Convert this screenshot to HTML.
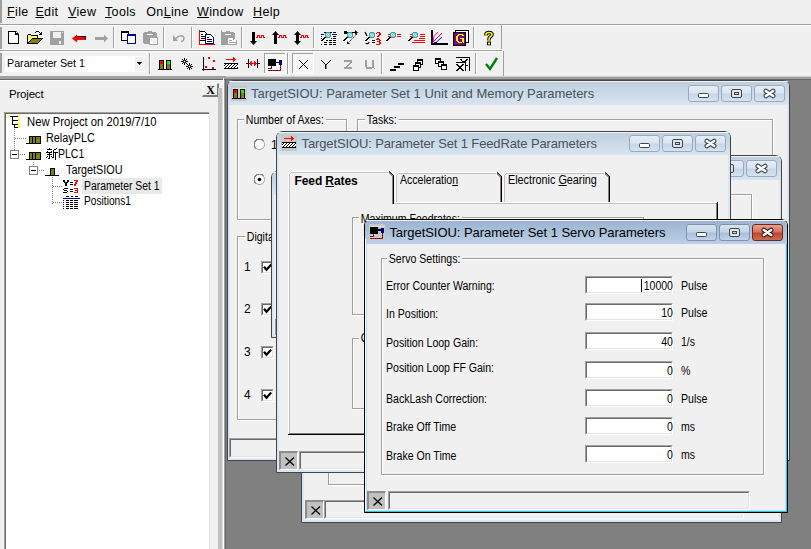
<!DOCTYPE html><html><head><meta charset="utf-8"><style>
*{margin:0;padding:0;box-sizing:border-box}
html,body{width:811px;height:549px;overflow:hidden;background:#f0f0f0;position:relative;font-family:"Liberation Sans",sans-serif}
.a{position:absolute}
.t{position:absolute;line-height:1;white-space:nowrap}
u{text-decoration:underline;text-underline-offset:1px;text-decoration-thickness:1px}
</style></head><body>
<div class="a" style="left:0px;top:0px;width:2px;height:23px;background:#a0a0a0"></div>
<div class="t" style="left:7px;top:6.42px;font-size:12.5px;color:#000;letter-spacing:0.35px;"><u>F</u>ile</div>
<div class="t" style="left:35.4px;top:6.42px;font-size:12.5px;color:#000;letter-spacing:0.35px;"><u>E</u>dit</div>
<div class="t" style="left:68px;top:6.42px;font-size:12.5px;color:#000;letter-spacing:0.35px;"><u>V</u>iew</div>
<div class="t" style="left:105px;top:6.42px;font-size:12.5px;color:#000;letter-spacing:0.35px;"><u>T</u>ools</div>
<div class="t" style="left:146.3px;top:6.42px;font-size:12.5px;color:#000;letter-spacing:0.35px;">On<u>L</u>ine</div>
<div class="t" style="left:197px;top:6.42px;font-size:12.5px;color:#000;letter-spacing:0.35px;"><u>W</u>indow</div>
<div class="t" style="left:253px;top:6.42px;font-size:12.5px;color:#000;letter-spacing:0.35px;"><u>H</u>elp</div>
<div class="a" style="left:0px;top:24px;width:811px;height:1px;background:#a0a0a0"></div>
<div class="a" style="left:0px;top:25px;width:811px;height:1px;background:#fff"></div>
<div class="a" style="left:0px;top:27px;width:2px;height:22px;background:#a0a0a0"></div>
<div class="a" style="left:0px;top:53px;width:2px;height:20px;background:#a0a0a0"></div>
<div class="a" style="left:501px;top:25px;width:1px;height:26px;background:#a0a0a0"></div>
<div class="a" style="left:0px;top:49px;width:502px;height:1px;background:#fff"></div>
<div class="a" style="left:0px;top:50px;width:502px;height:1px;background:#a0a0a0"></div>
<div class="a" style="left:0px;top:51px;width:503px;height:1px;background:#fff"></div>
<div class="a" style="left:503px;top:51px;width:1px;height:26px;background:#a0a0a0"></div>
<div class="a" style="left:113px;top:27px;width:1px;height:21px;background:#a0a0a0"></div>
<div class="a" style="left:114px;top:27px;width:1px;height:21px;background:#fff"></div>
<div class="a" style="left:163px;top:27px;width:1px;height:21px;background:#a0a0a0"></div>
<div class="a" style="left:164px;top:27px;width:1px;height:21px;background:#fff"></div>
<div class="a" style="left:191px;top:27px;width:1px;height:21px;background:#a0a0a0"></div>
<div class="a" style="left:192px;top:27px;width:1px;height:21px;background:#fff"></div>
<div class="a" style="left:241px;top:27px;width:1px;height:21px;background:#a0a0a0"></div>
<div class="a" style="left:242px;top:27px;width:1px;height:21px;background:#fff"></div>
<div class="a" style="left:313px;top:27px;width:1px;height:21px;background:#a0a0a0"></div>
<div class="a" style="left:314px;top:27px;width:1px;height:21px;background:#fff"></div>
<div class="a" style="left:473px;top:27px;width:1px;height:21px;background:#a0a0a0"></div>
<div class="a" style="left:474px;top:27px;width:1px;height:21px;background:#fff"></div>
<div class="a" style="left:149px;top:53px;width:1px;height:21px;background:#a0a0a0"></div>
<div class="a" style="left:150px;top:53px;width:1px;height:21px;background:#fff"></div>
<div class="a" style="left:287px;top:53px;width:1px;height:21px;background:#a0a0a0"></div>
<div class="a" style="left:288px;top:53px;width:1px;height:21px;background:#fff"></div>
<div class="a" style="left:381px;top:53px;width:1px;height:21px;background:#a0a0a0"></div>
<div class="a" style="left:382px;top:53px;width:1px;height:21px;background:#fff"></div>
<div class="a" style="left:475px;top:53px;width:1px;height:21px;background:#a0a0a0"></div>
<div class="a" style="left:476px;top:53px;width:1px;height:21px;background:#fff"></div>
<div class="a" style="left:0px;top:76px;width:226px;height:1px;background:#a0a0a0"></div>
<div class="a" style="left:226px;top:76px;width:585px;height:1px;background:#d0d0d0"></div>
<div class="a" style="left:0px;top:77px;width:811px;height:2px;background:#a0a0a0"></div>
<div class="a" style="left:0px;top:79px;width:811px;height:1px;background:#696969"></div>
<div class="a" style="left:0px;top:80px;width:223px;height:1px;background:#fff"></div>
<div class="a" style="left:5px;top:56px;width:140px;height:16px;background:#fff"></div>
<div class="a" style="left:135px;top:57px;width:10px;height:14px;background:#f0f0f0"></div>
<svg class="a" style="left:136px;top:61px" width="7" height="5" viewBox="0 0 7 5"><path d="M0.8 1h5.4l-2.7 3z" fill="#000"/></svg>
<div class="t" style="left:7.1px;top:57.97px;font-size:11.5px;color:#000;letter-spacing:0px;transform:scaleX(0.93);transform-origin:0 0;">Parameter Set 1</div>
<div class="t" style="left:9px;top:89.27px;font-size:11.5px;color:#000;letter-spacing:-0.2px;">Project</div>
<div class="a" style="left:202px;top:83px;width:17px;height:14px;background:#f0f0f0;border-top:1px solid #fff;border-left:1px solid #fff;border-right:2px solid #7a7a7a;border-bottom:2px solid #7a7a7a"></div>
<div class="t" style="left:206.3px;top:83.84px;font-size:12px;color:#000;font-family:'Liberation Serif',serif;font-weight:bold">X</div>
<div class="a" style="left:4px;top:112px;width:206px;height:437px;background:#fff;border-top:1px solid #a0a0a0;border-left:1px solid #a0a0a0"></div>
<div class="a" style="left:5px;top:113px;width:205px;height:436px;border-top:1px solid #696969;border-left:1px solid #696969"></div>
<div class="a" style="left:209px;top:112px;width:1px;height:437px;background:#e3e3e3"></div>
<div class="a" style="left:218px;top:88px;width:4px;height:461px;background:#c0c0c0"></div>
<div class="a" style="left:222px;top:88px;width:1px;height:461px;background:#e3e3e3"></div>
<div class="a" style="left:223px;top:78px;width:1px;height:471px;background:#fff"></div>
<div class="a" style="left:224px;top:80px;width:1px;height:469px;background:#a0a0a0"></div>
<div class="a" style="left:225px;top:80px;width:1px;height:469px;background:#696969"></div>
<div class="a" style="left:226px;top:80px;width:585px;height:469px;background:#808080"></div>
<svg class="a" style="left:0;top:0" width="811" height="80" viewBox="0 0 811 80"><path d="M8 31h8l3 3v10h-11z" fill="#000" /><path d="M9 32h6v3h3v8h-9z" fill="#fff" /><rect x="16" y="32" width="1" height="1" fill="#fff"/><rect x="36" y="31" width="1" height="1" fill="#000"/><rect x="37" y="31" width="1" height="1" fill="#000"/><rect x="38" y="31" width="1" height="1" fill="#000"/><rect x="35" y="32" width="1" height="1" fill="#000"/><rect x="39" y="32" width="1" height="1" fill="#000"/><rect x="41" y="32" width="1" height="1" fill="#000"/><rect x="40" y="33" width="1" height="1" fill="#000"/><rect x="41" y="33" width="1" height="1" fill="#000"/><rect x="28" y="34" width="1" height="1" fill="#000"/><rect x="29" y="34" width="1" height="1" fill="#000"/><rect x="30" y="34" width="1" height="1" fill="#000"/><rect x="39" y="34" width="1" height="1" fill="#000"/><rect x="40" y="34" width="1" height="1" fill="#000"/><rect x="41" y="34" width="1" height="1" fill="#000"/><rect x="27" y="35" width="1" height="1" fill="#000"/><rect x="31" y="35" width="1" height="1" fill="#000"/><rect x="32" y="35" width="1" height="1" fill="#000"/><rect x="33" y="35" width="1" height="1" fill="#000"/><rect x="34" y="35" width="1" height="1" fill="#000"/><rect x="35" y="35" width="1" height="1" fill="#000"/><rect x="36" y="35" width="1" height="1" fill="#000"/><rect x="37" y="35" width="1" height="1" fill="#000"/><rect x="27" y="36" width="1" height="1" fill="#000"/><rect x="37" y="36" width="1" height="1" fill="#000"/><rect x="27" y="37" width="1" height="1" fill="#000"/><rect x="37" y="37" width="1" height="1" fill="#000"/><rect x="27" y="38" width="1" height="1" fill="#000"/><rect x="32" y="38" width="1" height="1" fill="#000"/><rect x="33" y="38" width="1" height="1" fill="#000"/><rect x="34" y="38" width="1" height="1" fill="#000"/><rect x="35" y="38" width="1" height="1" fill="#000"/><rect x="36" y="38" width="1" height="1" fill="#000"/><rect x="37" y="38" width="1" height="1" fill="#000"/><rect x="38" y="38" width="1" height="1" fill="#000"/><rect x="39" y="38" width="1" height="1" fill="#000"/><rect x="40" y="38" width="1" height="1" fill="#000"/><rect x="41" y="38" width="1" height="1" fill="#000"/><rect x="42" y="38" width="1" height="1" fill="#000"/><rect x="27" y="39" width="1" height="1" fill="#000"/><rect x="31" y="39" width="1" height="1" fill="#000"/><rect x="41" y="39" width="1" height="1" fill="#000"/><rect x="27" y="40" width="1" height="1" fill="#000"/><rect x="30" y="40" width="1" height="1" fill="#000"/><rect x="40" y="40" width="1" height="1" fill="#000"/><rect x="27" y="41" width="1" height="1" fill="#000"/><rect x="29" y="41" width="1" height="1" fill="#000"/><rect x="39" y="41" width="1" height="1" fill="#000"/><rect x="27" y="42" width="1" height="1" fill="#000"/><rect x="28" y="42" width="1" height="1" fill="#000"/><rect x="38" y="42" width="1" height="1" fill="#000"/><rect x="27" y="43" width="1" height="1" fill="#000"/><rect x="28" y="43" width="1" height="1" fill="#000"/><rect x="29" y="43" width="1" height="1" fill="#000"/><rect x="30" y="43" width="1" height="1" fill="#000"/><rect x="31" y="43" width="1" height="1" fill="#000"/><rect x="32" y="43" width="1" height="1" fill="#000"/><rect x="33" y="43" width="1" height="1" fill="#000"/><rect x="34" y="43" width="1" height="1" fill="#000"/><rect x="35" y="43" width="1" height="1" fill="#000"/><rect x="36" y="43" width="1" height="1" fill="#000"/><rect x="37" y="43" width="1" height="1" fill="#000"/><rect x="28" y="35" width="1" height="1" fill="#ff0"/><rect x="29" y="35" width="1" height="1" fill="#fff"/><rect x="30" y="35" width="1" height="1" fill="#ff0"/><rect x="28" y="36" width="1" height="1" fill="#fff"/><rect x="29" y="36" width="1" height="1" fill="#ff0"/><rect x="30" y="36" width="1" height="1" fill="#fff"/><rect x="31" y="36" width="1" height="1" fill="#ff0"/><rect x="32" y="36" width="1" height="1" fill="#fff"/><rect x="33" y="36" width="1" height="1" fill="#ff0"/><rect x="34" y="36" width="1" height="1" fill="#fff"/><rect x="35" y="36" width="1" height="1" fill="#ff0"/><rect x="36" y="36" width="1" height="1" fill="#fff"/><rect x="28" y="37" width="1" height="1" fill="#ff0"/><rect x="29" y="37" width="1" height="1" fill="#fff"/><rect x="30" y="37" width="1" height="1" fill="#ff0"/><rect x="31" y="37" width="1" height="1" fill="#fff"/><rect x="32" y="37" width="1" height="1" fill="#ff0"/><rect x="33" y="37" width="1" height="1" fill="#fff"/><rect x="34" y="37" width="1" height="1" fill="#ff0"/><rect x="35" y="37" width="1" height="1" fill="#fff"/><rect x="36" y="37" width="1" height="1" fill="#ff0"/><rect x="28" y="38" width="1" height="1" fill="#fff"/><rect x="29" y="38" width="1" height="1" fill="#ff0"/><rect x="30" y="38" width="1" height="1" fill="#fff"/><rect x="31" y="38" width="1" height="1" fill="#ff0"/><rect x="28" y="39" width="1" height="1" fill="#ff0"/><rect x="29" y="39" width="1" height="1" fill="#fff"/><rect x="30" y="39" width="1" height="1" fill="#ff0"/><rect x="28" y="40" width="1" height="1" fill="#fff"/><rect x="29" y="40" width="1" height="1" fill="#ff0"/><rect x="28" y="41" width="1" height="1" fill="#ff0"/><rect x="32" y="39" width="1" height="1" fill="#808000"/><rect x="33" y="39" width="1" height="1" fill="#808000"/><rect x="34" y="39" width="1" height="1" fill="#808000"/><rect x="35" y="39" width="1" height="1" fill="#808000"/><rect x="36" y="39" width="1" height="1" fill="#808000"/><rect x="37" y="39" width="1" height="1" fill="#808000"/><rect x="38" y="39" width="1" height="1" fill="#808000"/><rect x="39" y="39" width="1" height="1" fill="#808000"/><rect x="40" y="39" width="1" height="1" fill="#808000"/><rect x="31" y="40" width="1" height="1" fill="#808000"/><rect x="32" y="40" width="1" height="1" fill="#808000"/><rect x="33" y="40" width="1" height="1" fill="#808000"/><rect x="34" y="40" width="1" height="1" fill="#808000"/><rect x="35" y="40" width="1" height="1" fill="#808000"/><rect x="36" y="40" width="1" height="1" fill="#808000"/><rect x="37" y="40" width="1" height="1" fill="#808000"/><rect x="38" y="40" width="1" height="1" fill="#808000"/><rect x="39" y="40" width="1" height="1" fill="#808000"/><rect x="30" y="41" width="1" height="1" fill="#808000"/><rect x="31" y="41" width="1" height="1" fill="#808000"/><rect x="32" y="41" width="1" height="1" fill="#808000"/><rect x="33" y="41" width="1" height="1" fill="#808000"/><rect x="34" y="41" width="1" height="1" fill="#808000"/><rect x="35" y="41" width="1" height="1" fill="#808000"/><rect x="36" y="41" width="1" height="1" fill="#808000"/><rect x="37" y="41" width="1" height="1" fill="#808000"/><rect x="38" y="41" width="1" height="1" fill="#808000"/><rect x="29" y="42" width="1" height="1" fill="#808000"/><rect x="30" y="42" width="1" height="1" fill="#808000"/><rect x="31" y="42" width="1" height="1" fill="#808000"/><rect x="32" y="42" width="1" height="1" fill="#808000"/><rect x="33" y="42" width="1" height="1" fill="#808000"/><rect x="34" y="42" width="1" height="1" fill="#808000"/><rect x="35" y="42" width="1" height="1" fill="#808000"/><rect x="36" y="42" width="1" height="1" fill="#808000"/><rect x="37" y="42" width="1" height="1" fill="#808000"/><rect x="50" y="31" width="14" height="14" fill="#a0a0a0"/><rect x="53" y="32" width="8" height="6" fill="#f0f0f0"/><rect x="59" y="41" width="2" height="3" fill="#f0f0f0"/><rect x="62" y="32" width="1" height="1" fill="#f0f0f0"/><path d="M72 38.5l5-4v2.5h9v3h-9v2.5z" fill="#f00" /><rect x="77" y="36" width="9" height="1" fill="#000"/><rect x="85" y="36" width="1" height="3" fill="#000"/><path d="M95 37h9v-2.5l4 4l-4 4v-2.5h-9z" fill="#a0a0a0" /><rect x="121" y="31" width="8" height="10" fill="#000"/><rect x="122" y="33" width="6" height="7" fill="#fff"/><rect x="127" y="34" width="9" height="10" fill="#00008b"/><rect x="128" y="36" width="7" height="7" fill="#fff"/><rect x="148" y="31" width="4" height="1" fill="#a0a0a0"/><rect x="144" y="32" width="12" height="1" fill="#a0a0a0"/><rect x="143" y="33" width="14" height="10" fill="#a0a0a0"/><rect x="144" y="43" width="12" height="1" fill="#a0a0a0"/><rect x="147" y="34" width="6" height="1" fill="#fff"/><rect x="149" y="37" width="9" height="8" fill="#a0a0a0"/><rect x="150" y="38" width="7" height="6" fill="#fff"/><rect x="151" y="39" width="5" height="4" fill="#f0f0f0"/><path d="M176 38.5c2-3 8-4 8 0c0 2-2 3-3 3" fill="none" stroke="#a0a0a0" stroke-width="1.5" /><path d="M173 35v6h5z" fill="#a0a0a0" /><rect x="199" y="30" width="1" height="15" fill="#f00"/><rect x="199" y="44" width="16" height="1" fill="#f00"/><rect x="200" y="32" width="5" height="11" fill="#fff"/><rect x="200" y="31" width="5" height="1" fill="#000"/><rect x="205" y="32" width="1" height="1" fill="#000"/><rect x="206" y="33" width="1" height="1" fill="#000"/><rect x="201" y="34" width="2" height="1" fill="#000"/><rect x="201" y="36" width="4" height="1" fill="#000"/><rect x="201" y="38" width="4" height="1" fill="#000"/><rect x="200" y="40" width="5" height="1" fill="#000"/><rect x="206" y="35" width="7" height="8" fill="#fff"/><rect x="205" y="34" width="6" height="1" fill="#00008b"/><rect x="211" y="35" width="1" height="1" fill="#00008b"/><rect x="212" y="36" width="1" height="1" fill="#00008b"/><rect x="213" y="37" width="1" height="7" fill="#00008b"/><rect x="205" y="34" width="1" height="10" fill="#00008b"/><rect x="205" y="43" width="9" height="1" fill="#00008b"/><rect x="211" y="36" width="1" height="1" fill="#fff"/><rect x="207" y="37" width="2" height="1" fill="#000"/><rect x="207" y="39" width="5" height="1" fill="#000"/><rect x="207" y="41" width="5" height="1" fill="#000"/><rect x="221" y="30" width="1" height="2" fill="#a0a0a0"/><rect x="226" y="31" width="4" height="1" fill="#a0a0a0"/><rect x="221" y="32" width="13" height="1" fill="#a0a0a0"/><rect x="221" y="33" width="14" height="12" fill="#a0a0a0"/><rect x="225" y="34" width="6" height="1" fill="#fff"/><rect x="228" y="38" width="5" height="6" fill="#fff"/><rect x="233" y="40" width="3" height="4" fill="#fff"/><rect x="233" y="39" width="1" height="1" fill="#a0a0a0"/><rect x="234" y="39" width="1" height="1" fill="#fff"/><rect x="236" y="40" width="1" height="5" fill="#a0a0a0"/><rect x="228" y="44" width="9" height="1" fill="#a0a0a0"/><rect x="229" y="40" width="3" height="1" fill="#a0a0a0"/><rect x="229" y="42" width="7" height="1" fill="#a0a0a0"/><rect x="252" y="32" width="3" height="9" fill="#000"/><path d="M250 41h7l-3.5 4z" fill="#000" /><rect x="256" y="37" width="2" height="1" fill="#f00"/><rect x="257" y="35" width="1" height="3" fill="#f00"/><rect x="257" y="35" width="3" height="1" fill="#f00"/><rect x="259" y="35" width="1" height="3" fill="#f00"/><rect x="259" y="37" width="3" height="1" fill="#f00"/><rect x="261" y="35" width="1" height="3" fill="#f00"/><rect x="261" y="35" width="3" height="1" fill="#f00"/><rect x="263" y="35" width="1" height="3" fill="#f00"/><rect x="263" y="37" width="2" height="1" fill="#f00"/><rect x="274" y="35" width="3" height="9" fill="#000"/><path d="M272 35h7l-3.5-4z" fill="#000" /><rect x="278" y="37" width="2" height="1" fill="#f00"/><rect x="279" y="35" width="1" height="3" fill="#f00"/><rect x="279" y="35" width="3" height="1" fill="#f00"/><rect x="281" y="35" width="1" height="3" fill="#f00"/><rect x="281" y="37" width="3" height="1" fill="#f00"/><rect x="283" y="35" width="1" height="3" fill="#f00"/><rect x="283" y="35" width="3" height="1" fill="#f00"/><rect x="285" y="35" width="1" height="3" fill="#f00"/><rect x="285" y="37" width="2" height="1" fill="#f00"/><rect x="296" y="35" width="3" height="6" fill="#000"/><path d="M294 35h7l-3.5-4z" fill="#000" /><path d="M294 41h7l-3.5 4z" fill="#000" /><rect x="300" y="37" width="2" height="1" fill="#f00"/><rect x="301" y="35" width="1" height="3" fill="#f00"/><rect x="301" y="35" width="3" height="1" fill="#f00"/><rect x="303" y="35" width="1" height="3" fill="#f00"/><rect x="303" y="37" width="3" height="1" fill="#f00"/><rect x="305" y="35" width="1" height="3" fill="#f00"/><rect x="305" y="35" width="3" height="1" fill="#f00"/><rect x="307" y="35" width="1" height="3" fill="#f00"/><rect x="307" y="37" width="2" height="1" fill="#f00"/><rect x="324" y="32" width="2" height="1" fill="#000"/><rect x="330" y="32" width="2" height="1" fill="#000"/><rect x="333" y="32" width="3" height="1" fill="#000"/><rect x="321" y="34" width="3" height="1" fill="#00008b"/><rect x="332" y="34" width="5" height="1" fill="#00008b"/><rect x="321" y="36" width="1" height="1" fill="#00008b"/><rect x="321" y="38" width="1" height="1" fill="#00008b"/><rect x="321" y="44" width="1" height="1" fill="#00008b"/><rect x="333" y="36" width="3" height="1" fill="#000"/><rect x="333" y="38" width="3" height="1" fill="#000"/><rect x="331" y="38" width="1" height="1" fill="#000"/><rect x="326" y="40" width="2" height="1" fill="#000"/><rect x="329" y="40" width="3" height="1" fill="#000"/><rect x="333" y="40" width="3" height="1" fill="#000"/><rect x="324" y="42" width="3" height="1" fill="#000"/><rect x="329" y="42" width="3" height="1" fill="#000"/><rect x="333" y="42" width="3" height="1" fill="#000"/><rect x="324" y="44" width="3" height="1" fill="#000"/><rect x="329" y="44" width="3" height="1" fill="#000"/><rect x="333" y="44" width="3" height="1" fill="#000"/><rect x="324" y="37" width="2" height="1" fill="#000"/><rect x="323" y="38" width="2" height="1" fill="#000"/><rect x="322" y="39" width="2" height="1" fill="#000"/><rect x="321" y="40" width="2" height="1" fill="#000"/><rect x="326" y="32" width="4" height="1" fill="#808080"/><rect x="326" y="37" width="4" height="1" fill="#808080"/><rect x="325" y="33" width="1" height="4" fill="#808080"/><rect x="330" y="33" width="1" height="4" fill="#808080"/><rect x="326" y="33" width="4" height="4" fill="#00ffff"/><rect x="327" y="33" width="1" height="1" fill="#fff"/><rect x="326" y="34" width="1" height="1" fill="#fff"/><rect x="328" y="34" width="1" height="1" fill="#fff"/><rect x="327" y="35" width="1" height="1" fill="#fff"/><rect x="329" y="35" width="1" height="1" fill="#fff"/><rect x="328" y="36" width="1" height="1" fill="#fff"/><rect x="344" y="31" width="3" height="3" fill="#000"/><rect x="347" y="32" width="10" height="1" fill="#000"/><path d="M355 30l3 2.5l-3 2.5z" fill="#000" /><path d="M357 34L349 42" fill="none" stroke="#000" stroke-width="1" stroke-dasharray="1.2 1"/><path d="M347 44h3l-3-3z" fill="#000" /><rect x="346" y="37" width="2" height="1" fill="#000"/><rect x="345" y="38" width="2" height="1" fill="#000"/><rect x="344" y="39" width="2" height="1" fill="#000"/><rect x="343" y="40" width="2" height="1" fill="#000"/><rect x="348" y="32" width="4" height="1" fill="#808080"/><rect x="348" y="37" width="4" height="1" fill="#808080"/><rect x="347" y="33" width="1" height="4" fill="#808080"/><rect x="352" y="33" width="1" height="4" fill="#808080"/><rect x="348" y="33" width="4" height="4" fill="#00ffff"/><rect x="349" y="33" width="1" height="1" fill="#fff"/><rect x="348" y="34" width="1" height="1" fill="#fff"/><rect x="350" y="34" width="1" height="1" fill="#fff"/><rect x="349" y="35" width="1" height="1" fill="#fff"/><rect x="351" y="35" width="1" height="1" fill="#fff"/><rect x="350" y="36" width="1" height="1" fill="#fff"/><path d="M365 32L367 36" fill="none" stroke="#000" stroke-width="1.3" /><path d="M366 43c0 1 3 1 3-1" fill="none" stroke="#000" stroke-width="1.2" /><rect x="368" y="37" width="2" height="1" fill="#000"/><rect x="367" y="38" width="2" height="1" fill="#000"/><rect x="366" y="39" width="2" height="1" fill="#000"/><rect x="365" y="40" width="2" height="1" fill="#000"/><rect x="370" y="32" width="4" height="1" fill="#808080"/><rect x="370" y="37" width="4" height="1" fill="#808080"/><rect x="369" y="33" width="1" height="4" fill="#808080"/><rect x="374" y="33" width="1" height="4" fill="#808080"/><rect x="370" y="33" width="4" height="4" fill="#00ffff"/><rect x="371" y="33" width="1" height="1" fill="#fff"/><rect x="370" y="34" width="1" height="1" fill="#fff"/><rect x="372" y="34" width="1" height="1" fill="#fff"/><rect x="371" y="35" width="1" height="1" fill="#fff"/><rect x="373" y="35" width="1" height="1" fill="#fff"/><rect x="372" y="36" width="1" height="1" fill="#fff"/><rect x="372" y="40" width="3" height="1" fill="#000"/><rect x="372" y="42" width="3" height="1" fill="#000"/><rect x="377" y="32" width="1" height="1" fill="#f00"/><rect x="378" y="32" width="1" height="1" fill="#f00"/><rect x="379" y="32" width="1" height="1" fill="#f00"/><rect x="376" y="33" width="1" height="1" fill="#f00"/><rect x="379" y="33" width="1" height="1" fill="#f00"/><rect x="380" y="33" width="1" height="1" fill="#f00"/><rect x="379" y="34" width="1" height="1" fill="#f00"/><rect x="380" y="34" width="1" height="1" fill="#f00"/><rect x="378" y="35" width="1" height="1" fill="#f00"/><rect x="379" y="35" width="1" height="1" fill="#f00"/><rect x="377" y="36" width="1" height="1" fill="#f00"/><rect x="378" y="36" width="1" height="1" fill="#f00"/><rect x="377" y="38" width="1" height="1" fill="#f00"/><rect x="378" y="38" width="1" height="1" fill="#f00"/><rect x="376" y="39" width="1" height="1" fill="#f00"/><rect x="377" y="39" width="1" height="1" fill="#f00"/><rect x="378" y="39" width="1" height="1" fill="#f00"/><rect x="379" y="39" width="1" height="1" fill="#f00"/><rect x="379" y="40" width="1" height="1" fill="#f00"/><rect x="380" y="40" width="1" height="1" fill="#f00"/><rect x="377" y="41" width="1" height="1" fill="#f00"/><rect x="378" y="41" width="1" height="1" fill="#f00"/><rect x="379" y="41" width="1" height="1" fill="#f00"/><rect x="379" y="42" width="1" height="1" fill="#f00"/><rect x="380" y="42" width="1" height="1" fill="#f00"/><rect x="379" y="43" width="1" height="1" fill="#f00"/><rect x="380" y="43" width="1" height="1" fill="#f00"/><rect x="376" y="44" width="1" height="1" fill="#f00"/><rect x="377" y="44" width="1" height="1" fill="#f00"/><rect x="378" y="44" width="1" height="1" fill="#f00"/><rect x="379" y="44" width="1" height="1" fill="#f00"/><rect x="388" y="34" width="2" height="1" fill="#f00"/><rect x="388" y="36" width="2" height="1" fill="#f00"/><rect x="389" y="37" width="2" height="1" fill="#000"/><rect x="388" y="38" width="2" height="1" fill="#000"/><rect x="387" y="39" width="2" height="1" fill="#000"/><rect x="386" y="40" width="2" height="1" fill="#000"/><rect x="391" y="32" width="4" height="1" fill="#808080"/><rect x="391" y="37" width="4" height="1" fill="#808080"/><rect x="390" y="33" width="1" height="4" fill="#808080"/><rect x="395" y="33" width="1" height="4" fill="#808080"/><rect x="391" y="33" width="4" height="4" fill="#00ffff"/><rect x="392" y="33" width="1" height="1" fill="#fff"/><rect x="391" y="34" width="1" height="1" fill="#fff"/><rect x="393" y="34" width="1" height="1" fill="#fff"/><rect x="392" y="35" width="1" height="1" fill="#fff"/><rect x="394" y="35" width="1" height="1" fill="#fff"/><rect x="393" y="36" width="1" height="1" fill="#fff"/><rect x="397" y="34" width="4" height="1" fill="#f00"/><rect x="397" y="36" width="4" height="1" fill="#f00"/><rect x="410" y="34" width="2" height="1" fill="#f00"/><rect x="410" y="36" width="2" height="1" fill="#f00"/><rect x="410" y="38" width="1" height="1" fill="#f00"/><rect x="420" y="34" width="5" height="1" fill="#f00"/><rect x="420" y="36" width="5" height="1" fill="#f00"/><rect x="419" y="38" width="6" height="1" fill="#f00"/><rect x="414" y="40" width="11" height="1" fill="#f00"/><rect x="412" y="42" width="13" height="1" fill="#f00"/><rect x="411" y="37" width="2" height="1" fill="#000"/><rect x="410" y="38" width="2" height="1" fill="#000"/><rect x="409" y="39" width="2" height="1" fill="#000"/><rect x="408" y="40" width="2" height="1" fill="#000"/><rect x="413" y="32" width="4" height="1" fill="#808080"/><rect x="413" y="37" width="4" height="1" fill="#808080"/><rect x="412" y="33" width="1" height="4" fill="#808080"/><rect x="417" y="33" width="1" height="4" fill="#808080"/><rect x="413" y="33" width="4" height="4" fill="#00ffff"/><rect x="414" y="33" width="1" height="1" fill="#fff"/><rect x="413" y="34" width="1" height="1" fill="#fff"/><rect x="415" y="34" width="1" height="1" fill="#fff"/><rect x="414" y="35" width="1" height="1" fill="#fff"/><rect x="416" y="35" width="1" height="1" fill="#fff"/><rect x="415" y="36" width="1" height="1" fill="#fff"/><rect x="431" y="30" width="2" height="15" fill="#000"/><rect x="431" y="43" width="17" height="2" fill="#000"/><path d="M432 43L442 33" fill="none" stroke="#f00" stroke-width="1" /><path d="M433.5 41V37L438 32" fill="none" stroke="#f0f" stroke-width="1" /><path d="M436 42.5L442 37" fill="none" stroke="#00f" stroke-width="1" /><rect x="434" y="42" width="3" height="1" fill="#00f"/><rect x="455" y="30" width="14" height="13" fill="#000"/><rect x="456" y="31" width="12" height="11" fill="#fff"/><rect x="453" y="32" width="13" height="14" fill="#000"/><rect x="454" y="33" width="11" height="12" fill="#800080"/><rect x="458" y="34" width="1" height="1" fill="#ff0"/><rect x="459" y="34" width="1" height="1" fill="#ff0"/><rect x="460" y="34" width="1" height="1" fill="#ff0"/><rect x="461" y="34" width="1" height="1" fill="#ff0"/><rect x="462" y="34" width="1" height="1" fill="#ff0"/><rect x="457" y="35" width="1" height="1" fill="#ff0"/><rect x="458" y="35" width="1" height="1" fill="#ff0"/><rect x="462" y="35" width="1" height="1" fill="#ff0"/><rect x="463" y="35" width="1" height="1" fill="#ff0"/><rect x="456" y="36" width="1" height="1" fill="#ff0"/><rect x="457" y="36" width="1" height="1" fill="#ff0"/><rect x="456" y="37" width="1" height="1" fill="#ff0"/><rect x="457" y="37" width="1" height="1" fill="#ff0"/><rect x="456" y="38" width="1" height="1" fill="#ff0"/><rect x="457" y="38" width="1" height="1" fill="#ff0"/><rect x="460" y="38" width="1" height="1" fill="#ff0"/><rect x="461" y="38" width="1" height="1" fill="#ff0"/><rect x="462" y="38" width="1" height="1" fill="#ff0"/><rect x="463" y="38" width="1" height="1" fill="#ff0"/><rect x="456" y="39" width="1" height="1" fill="#ff0"/><rect x="457" y="39" width="1" height="1" fill="#ff0"/><rect x="462" y="39" width="1" height="1" fill="#ff0"/><rect x="463" y="39" width="1" height="1" fill="#ff0"/><rect x="456" y="40" width="1" height="1" fill="#ff0"/><rect x="457" y="40" width="1" height="1" fill="#ff0"/><rect x="462" y="40" width="1" height="1" fill="#ff0"/><rect x="463" y="40" width="1" height="1" fill="#ff0"/><rect x="457" y="41" width="1" height="1" fill="#ff0"/><rect x="458" y="41" width="1" height="1" fill="#ff0"/><rect x="462" y="41" width="1" height="1" fill="#ff0"/><rect x="463" y="41" width="1" height="1" fill="#ff0"/><rect x="458" y="42" width="1" height="1" fill="#ff0"/><rect x="459" y="42" width="1" height="1" fill="#ff0"/><rect x="460" y="42" width="1" height="1" fill="#ff0"/><rect x="461" y="42" width="1" height="1" fill="#ff0"/><rect x="463" y="42" width="1" height="1" fill="#ff0"/><path d="M486 35.5V34.5C486 33 487.5 32.5 489 32.5S492 33 492 34.5C492 36 490.5 36.5 489.5 37.5C489 38 489 38.5 489 40.5" fill="none" stroke="#000" stroke-width="3.6" stroke-linejoin="round"/><rect x="487" y="41.5" width="4" height="3.8" fill="#000"/><path d="M486 35.5V34.5C486 33 487.5 32.5 489 32.5S492 33 492 34.5C492 36 490.5 36.5 489.5 37.5C489 38 489 38.5 489 40.5" fill="none" stroke="#ff0" stroke-width="1.6" stroke-linejoin="round"/><rect x="488" y="42.5" width="2" height="2" fill="#ff0"/><rect x="159" y="60" width="5" height="10" fill="#000"/><rect x="166" y="60" width="5" height="10" fill="#000"/><rect x="160" y="61" width="3" height="3" fill="#f00"/><rect x="167" y="61" width="3" height="3" fill="#0f0"/><rect x="160" y="64" width="3" height="5" fill="#808000"/><rect x="167" y="64" width="3" height="5" fill="#808000"/><rect x="158" y="69" width="14" height="1" fill="#000"/><path d="M181.0 61.5h7M184.5 58.0v7M182.0 59.0l5 5M187.0 59.0l-5 5" fill="none" stroke="#000" stroke-width="1" /><circle cx="184.5" cy="61.5" r="1.2" fill="#fff" stroke="#000"/><path d="M186.0 66.5h7M189.5 63.0v7M187.0 64.0l5 5M192.0 64.0l-5 5" fill="none" stroke="#000" stroke-width="1" /><circle cx="189.5" cy="66.5" r="1.2" fill="#fff" stroke="#000"/><path d="M186.5 63.5l1 1" fill="none" stroke="#000" stroke-width="1" /><rect x="203" y="57" width="1" height="13" fill="#000"/><rect x="202" y="69" width="14" height="1" fill="#000"/><path d="M202 69h3l-1.5 2z" fill="#000" /><rect x="205" y="66" width="2" height="2" fill="#f00"/><rect x="208" y="57" width="2" height="2" fill="#f00"/><rect x="213" y="60" width="2" height="2" fill="#f00"/><rect x="212" y="67" width="2" height="2" fill="#f00"/><rect x="226" y="59" width="8" height="1" fill="#f00"/><rect x="233" y="57" width="1" height="5" fill="#f00"/><rect x="234" y="58" width="1" height="3" fill="#f00"/><rect x="235" y="59" width="1" height="1" fill="#f00"/><rect x="224" y="63" width="14" height="6" fill="#000"/><rect x="224" y="64" width="1" height="1" fill="#fff"/><rect x="226" y="64" width="1" height="1" fill="#fff"/><rect x="227" y="64" width="1" height="1" fill="#fff"/><rect x="229" y="64" width="1" height="1" fill="#fff"/><rect x="230" y="64" width="1" height="1" fill="#fff"/><rect x="232" y="64" width="1" height="1" fill="#fff"/><rect x="233" y="64" width="1" height="1" fill="#fff"/><rect x="235" y="64" width="1" height="1" fill="#fff"/><rect x="236" y="64" width="1" height="1" fill="#fff"/><rect x="225" y="65" width="1" height="1" fill="#fff"/><rect x="226" y="65" width="1" height="1" fill="#fff"/><rect x="228" y="65" width="1" height="1" fill="#fff"/><rect x="229" y="65" width="1" height="1" fill="#fff"/><rect x="231" y="65" width="1" height="1" fill="#fff"/><rect x="232" y="65" width="1" height="1" fill="#fff"/><rect x="234" y="65" width="1" height="1" fill="#fff"/><rect x="235" y="65" width="1" height="1" fill="#fff"/><rect x="237" y="65" width="1" height="1" fill="#fff"/><rect x="224" y="66" width="1" height="1" fill="#fff"/><rect x="225" y="66" width="1" height="1" fill="#fff"/><rect x="227" y="66" width="1" height="1" fill="#fff"/><rect x="228" y="66" width="1" height="1" fill="#fff"/><rect x="230" y="66" width="1" height="1" fill="#fff"/><rect x="231" y="66" width="1" height="1" fill="#fff"/><rect x="233" y="66" width="1" height="1" fill="#fff"/><rect x="234" y="66" width="1" height="1" fill="#fff"/><rect x="236" y="66" width="1" height="1" fill="#fff"/><rect x="237" y="66" width="1" height="1" fill="#fff"/><rect x="224" y="67" width="1" height="1" fill="#fff"/><rect x="226" y="67" width="1" height="1" fill="#fff"/><rect x="227" y="67" width="1" height="1" fill="#fff"/><rect x="229" y="67" width="1" height="1" fill="#fff"/><rect x="230" y="67" width="1" height="1" fill="#fff"/><rect x="232" y="67" width="1" height="1" fill="#fff"/><rect x="233" y="67" width="1" height="1" fill="#fff"/><rect x="235" y="67" width="1" height="1" fill="#fff"/><rect x="236" y="67" width="1" height="1" fill="#fff"/><rect x="248" y="59" width="1" height="9" fill="#000"/><rect x="257" y="59" width="1" height="9" fill="#000"/><rect x="246" y="63" width="2" height="1" fill="#000"/><rect x="258" y="63" width="2" height="1" fill="#000"/><rect x="249" y="63" width="8" height="1" fill="#f00"/><rect x="250" y="62" width="1" height="3" fill="#f00"/><rect x="251" y="61" width="1" height="5" fill="#f00"/><rect x="255" y="62" width="1" height="3" fill="#f00"/><rect x="254" y="61" width="1" height="5" fill="#f00"/><defs><pattern id="chk" width="2" height="2" patternUnits="userSpaceOnUse"><rect width="2" height="2" fill="#f0f0f0"/><rect width="1" height="1" fill="#fff"/><rect x="1" y="1" width="1" height="1" fill="#fff"/></pattern></defs><rect x="264" y="53" width="22" height="21" fill="url(#chk)"/><rect x="264" y="53" width="22" height="1" fill="#a0a0a0"/><rect x="264" y="53" width="1" height="21" fill="#a0a0a0"/><rect x="285" y="53" width="1" height="21" fill="#fff"/><rect x="264" y="73" width="22" height="1" fill="#fff"/><rect x="292" y="53" width="22" height="21" fill="url(#chk)"/><rect x="292" y="53" width="22" height="1" fill="#a0a0a0"/><rect x="292" y="53" width="1" height="21" fill="#a0a0a0"/><rect x="313" y="53" width="1" height="21" fill="#fff"/><rect x="292" y="73" width="22" height="1" fill="#fff"/><rect x="268" y="59" width="8" height="7" fill="#000"/><rect x="276" y="62" width="3" height="1" fill="#000"/><rect x="279" y="60" width="3" height="5" fill="#00008b"/><rect x="271" y="66" width="1" height="1" fill="#f00"/><rect x="271" y="67" width="1" height="1" fill="#000"/><rect x="271" y="68" width="1" height="1" fill="#f00"/><rect x="270" y="68" width="1" height="1" fill="#000"/><rect x="269" y="68" width="1" height="1" fill="#f00"/><rect x="268" y="68" width="1" height="1" fill="#000"/><rect x="268" y="70" width="1" height="1" fill="#f00"/><rect x="269" y="70" width="1" height="1" fill="#000"/><rect x="270" y="70" width="1" height="1" fill="#f00"/><rect x="271" y="70" width="1" height="1" fill="#000"/><rect x="272" y="70" width="1" height="1" fill="#f00"/><rect x="273" y="70" width="1" height="1" fill="#000"/><rect x="274" y="70" width="1" height="1" fill="#f00"/><rect x="275" y="70" width="1" height="1" fill="#000"/><rect x="276" y="70" width="1" height="1" fill="#f00"/><rect x="277" y="70" width="1" height="1" fill="#000"/><rect x="278" y="70" width="1" height="1" fill="#f00"/><rect x="279" y="70" width="1" height="1" fill="#000"/><rect x="280" y="70" width="1" height="1" fill="#f00"/><rect x="280" y="69" width="1" height="1" fill="#000"/><rect x="280" y="68" width="1" height="1" fill="#f00"/><rect x="280" y="67" width="1" height="1" fill="#000"/><rect x="280" y="66" width="1" height="1" fill="#f00"/><rect x="280" y="65" width="1" height="1" fill="#000"/><rect x="299" y="60" width="1" height="1" fill="#000"/><rect x="307" y="60" width="1" height="1" fill="#000"/><rect x="300" y="61" width="1" height="1" fill="#000"/><rect x="306" y="61" width="1" height="1" fill="#000"/><rect x="301" y="62" width="1" height="1" fill="#000"/><rect x="305" y="62" width="1" height="1" fill="#000"/><rect x="302" y="63" width="1" height="1" fill="#000"/><rect x="304" y="63" width="1" height="1" fill="#000"/><rect x="303" y="64" width="1" height="1" fill="#000"/><rect x="303" y="64" width="1" height="1" fill="#000"/><rect x="304" y="65" width="1" height="1" fill="#000"/><rect x="302" y="65" width="1" height="1" fill="#000"/><rect x="305" y="66" width="1" height="1" fill="#000"/><rect x="301" y="66" width="1" height="1" fill="#000"/><rect x="306" y="67" width="1" height="1" fill="#000"/><rect x="300" y="67" width="1" height="1" fill="#000"/><rect x="307" y="68" width="1" height="1" fill="#000"/><rect x="299" y="68" width="1" height="1" fill="#000"/><rect x="321" y="60" width="1" height="1" fill="#000"/><rect x="330" y="60" width="1" height="1" fill="#000"/><rect x="322" y="61" width="1" height="1" fill="#000"/><rect x="329" y="61" width="1" height="1" fill="#000"/><rect x="323" y="62" width="1" height="1" fill="#000"/><rect x="328" y="62" width="1" height="1" fill="#000"/><rect x="324" y="63" width="1" height="1" fill="#000"/><rect x="327" y="63" width="1" height="1" fill="#000"/><rect x="325" y="64" width="1" height="1" fill="#000"/><rect x="326" y="64" width="1" height="1" fill="#000"/><rect x="325" y="64" width="1" height="5" fill="#000"/><rect x="326" y="65" width="1" height="4" fill="#888"/><rect x="344" y="60" width="8" height="2" fill="#a0a0a0"/><rect x="344" y="67" width="8" height="2" fill="#a0a0a0"/><rect x="350" y="62" width="2" height="1" fill="#a0a0a0"/><rect x="349" y="63" width="2" height="1" fill="#a0a0a0"/><rect x="348" y="64" width="2" height="1" fill="#a0a0a0"/><rect x="347" y="65" width="2" height="1" fill="#a0a0a0"/><rect x="346" y="66" width="2" height="1" fill="#a0a0a0"/><rect x="345" y="67" width="2" height="1" fill="#a0a0a0"/><rect x="365" y="60" width="2" height="7" fill="#a0a0a0"/><rect x="372" y="60" width="2" height="8" fill="#a0a0a0"/><rect x="366" y="67" width="6" height="2" fill="#a0a0a0"/><rect x="374" y="68" width="1" height="1" fill="#a0a0a0"/><rect x="390" y="69" width="6" height="2" fill="#000"/><rect x="394" y="66" width="6" height="2" fill="#000"/><rect x="398" y="63" width="6" height="2" fill="#000"/><rect x="417" y="59" width="6" height="6" fill="#000"/><rect x="418" y="61" width="4" height="3" fill="#fff"/><rect x="415" y="62" width="6" height="6" fill="#000"/><rect x="416" y="64" width="4" height="3" fill="#fff"/><rect x="413" y="65" width="6" height="6" fill="#000"/><rect x="414" y="67" width="4" height="3" fill="#fff"/><rect x="435" y="58" width="6" height="6" fill="#000"/><rect x="436" y="60" width="4" height="3" fill="#fff"/><rect x="438" y="61" width="6" height="6" fill="#000"/><rect x="439" y="63" width="4" height="3" fill="#fff"/><rect x="441" y="64" width="6" height="6" fill="#000"/><rect x="442" y="66" width="4" height="3" fill="#fff"/><rect x="456" y="57" width="14" height="1" fill="#000"/><rect x="469" y="57" width="1" height="14" fill="#000"/><rect x="465" y="61" width="1" height="10" fill="#000"/><rect x="456" y="62" width="10" height="1" fill="#000"/><rect x="460" y="59" width="1" height="1" fill="#000"/><rect x="461" y="59" width="1" height="1" fill="#000"/><rect x="461" y="60" width="1" height="1" fill="#000"/><rect x="462" y="61" width="1" height="1" fill="#000"/><rect x="463" y="61" width="1" height="1" fill="#000"/><rect x="466" y="59" width="1" height="1" fill="#000"/><rect x="467" y="59" width="1" height="1" fill="#000"/><rect x="466" y="60" width="1" height="1" fill="#000"/><rect x="465" y="60" width="1" height="1" fill="#000"/><rect x="464" y="61" width="1" height="1" fill="#000"/><rect x="466" y="65" width="1" height="1" fill="#000"/><rect x="467" y="65" width="1" height="1" fill="#000"/><rect x="456" y="64" width="2" height="1" fill="#000"/><rect x="462" y="64" width="2" height="1" fill="#000"/><rect x="457" y="65" width="2" height="1" fill="#000"/><rect x="461" y="65" width="2" height="1" fill="#000"/><rect x="458" y="66" width="2" height="1" fill="#000"/><rect x="460" y="66" width="2" height="1" fill="#000"/><rect x="459" y="67" width="2" height="1" fill="#000"/><rect x="459" y="67" width="2" height="1" fill="#000"/><rect x="460" y="68" width="2" height="1" fill="#000"/><rect x="458" y="68" width="2" height="1" fill="#000"/><rect x="461" y="69" width="2" height="1" fill="#000"/><rect x="457" y="69" width="2" height="1" fill="#000"/><rect x="462" y="70" width="2" height="1" fill="#000"/><rect x="456" y="70" width="2" height="1" fill="#000"/><path d="M486 64L490 69L497 58" fill="none" stroke="#008000" stroke-width="2.4" /></svg>
<svg class="a" style="left:0;top:0" width="30" height="130" viewBox="0 0 30 130" shape-rendering="crispEdges"><rect x="8" y="115" width="2" height="2" fill="#ff0"/><rect x="18" y="115" width="2" height="2" fill="#ff0"/><rect x="18" y="119" width="2" height="2" fill="#ff0"/><rect x="18" y="123" width="2" height="2" fill="#ff0"/><rect x="18" y="126" width="2" height="2" fill="#ff0"/><rect x="10" y="116" width="8" height="1" fill="#000"/><rect x="12" y="116" width="1" height="9" fill="#000"/><rect x="12" y="120" width="6" height="1" fill="#000"/><rect x="12" y="124" width="6" height="1" fill="#000"/><rect x="14" y="124" width="1" height="4" fill="#000"/><rect x="14" y="127" width="4" height="1" fill="#000"/></svg>
<div class="t" style="left:27.2px;top:116.34px;font-size:12px;color:#000;letter-spacing:0px;transform:scaleX(0.938);transform-origin:0 0;">New Project on 2019/7/10</div>
<div class="a" style="left:14px;top:129px;width:1px;height:25px;background:repeating-linear-gradient(to bottom,#808080 0 1px,transparent 1px 2px)"></div>
<div class="a" style="left:15px;top:138px;width:11px;height:1px;background:repeating-linear-gradient(to right,#808080 0 1px,transparent 1px 2px)"></div>
<svg class="a" style="left:26px;top:136px" width="15" height="8" viewBox="0 0 15 8" shape-rendering="crispEdges"><rect x="3" y="0" width="12" height="8" fill="#000"/><rect x="4" y="1" width="2" height="6" fill="#808000"/><rect x="7" y="1" width="2" height="6" fill="#808000"/><rect x="10" y="1" width="4" height="6" fill="#808000"/><rect x="11" y="2" width="1" height="1" fill="#f00"/><rect x="11" y="4" width="1" height="1" fill="#0f0"/><rect x="0" y="7" width="15" height="1" fill="#000"/></svg>
<div class="t" style="left:46px;top:132.34px;font-size:12px;color:#000;letter-spacing:0px;transform:scaleX(0.902);transform-origin:0 0;">RelayPLC</div>
<div class="a" style="left:10px;top:150px;width:9px;height:9px;background:#fff;border:1px solid #808080"></div>
<div class="a" style="left:12px;top:154px;width:5px;height:1px;background:#000"></div>
<div class="a" style="left:20px;top:154px;width:6px;height:1px;background:repeating-linear-gradient(to right,#808080 0 1px,transparent 1px 2px)"></div>
<svg class="a" style="left:26px;top:152px" width="15" height="8" viewBox="0 0 15 8" shape-rendering="crispEdges"><rect x="3" y="0" width="12" height="8" fill="#000"/><rect x="4" y="1" width="2" height="6" fill="#808000"/><rect x="7" y="1" width="2" height="6" fill="#808000"/><rect x="10" y="1" width="4" height="6" fill="#808000"/><rect x="11" y="2" width="1" height="1" fill="#f00"/><rect x="11" y="4" width="1" height="1" fill="#0f0"/><rect x="0" y="7" width="15" height="1" fill="#000"/></svg>
<svg class="a" style="left:0;top:0" width="60" height="162" viewBox="0 0 60 162" shape-rendering="crispEdges"><rect x="49" y="148" width="1" height="1" fill="#000"/><rect x="56" y="148" width="1" height="1" fill="#000"/><rect x="47" y="149" width="1" height="1" fill="#000"/><rect x="48" y="149" width="1" height="1" fill="#000"/><rect x="49" y="149" width="1" height="1" fill="#000"/><rect x="50" y="149" width="1" height="1" fill="#000"/><rect x="51" y="149" width="1" height="1" fill="#000"/><rect x="54" y="149" width="1" height="1" fill="#000"/><rect x="55" y="149" width="1" height="1" fill="#000"/><rect x="53" y="150" width="1" height="1" fill="#000"/><rect x="47" y="151" width="1" height="1" fill="#000"/><rect x="51" y="151" width="1" height="1" fill="#000"/><rect x="53" y="151" width="1" height="1" fill="#000"/><rect x="46" y="152" width="1" height="1" fill="#000"/><rect x="47" y="152" width="1" height="1" fill="#000"/><rect x="48" y="152" width="1" height="1" fill="#000"/><rect x="49" y="152" width="1" height="1" fill="#000"/><rect x="50" y="152" width="1" height="1" fill="#000"/><rect x="51" y="152" width="1" height="1" fill="#000"/><rect x="53" y="152" width="1" height="1" fill="#000"/><rect x="54" y="152" width="1" height="1" fill="#000"/><rect x="55" y="152" width="1" height="1" fill="#000"/><rect x="56" y="152" width="1" height="1" fill="#000"/><rect x="57" y="152" width="1" height="1" fill="#000"/><rect x="49" y="153" width="1" height="1" fill="#000"/><rect x="53" y="153" width="1" height="1" fill="#000"/><rect x="55" y="153" width="1" height="1" fill="#000"/><rect x="47" y="154" width="1" height="1" fill="#000"/><rect x="48" y="154" width="1" height="1" fill="#000"/><rect x="49" y="154" width="1" height="1" fill="#000"/><rect x="50" y="154" width="1" height="1" fill="#000"/><rect x="51" y="154" width="1" height="1" fill="#000"/><rect x="53" y="154" width="1" height="1" fill="#000"/><rect x="55" y="154" width="1" height="1" fill="#000"/><rect x="49" y="155" width="1" height="1" fill="#000"/><rect x="53" y="155" width="1" height="1" fill="#000"/><rect x="55" y="155" width="1" height="1" fill="#000"/><rect x="47" y="156" width="1" height="1" fill="#000"/><rect x="49" y="156" width="1" height="1" fill="#000"/><rect x="51" y="156" width="1" height="1" fill="#000"/><rect x="53" y="156" width="1" height="1" fill="#000"/><rect x="55" y="156" width="1" height="1" fill="#000"/><rect x="46" y="157" width="1" height="1" fill="#000"/><rect x="49" y="157" width="1" height="1" fill="#000"/><rect x="52" y="157" width="1" height="1" fill="#000"/><rect x="53" y="157" width="1" height="1" fill="#000"/><rect x="55" y="157" width="1" height="1" fill="#000"/><rect x="48" y="158" width="1" height="1" fill="#000"/><rect x="49" y="158" width="1" height="1" fill="#000"/><rect x="55" y="158" width="1" height="1" fill="#000"/><rect x="55" y="159" width="1" height="1" fill="#000"/></svg>
<div class="t" style="left:58.3px;top:148.04px;font-size:12px;color:#000;letter-spacing:0px;transform:scaleX(0.875);transform-origin:0 0;">PLC1</div>
<div class="a" style="left:33px;top:162px;width:1px;height:4px;background:repeating-linear-gradient(to bottom,#808080 0 1px,transparent 1px 2px)"></div>
<div class="a" style="left:29px;top:166px;width:9px;height:9px;background:#fff;border:1px solid #808080"></div>
<div class="a" style="left:31px;top:170px;width:5px;height:1px;background:#000"></div>
<div class="a" style="left:39px;top:170px;width:6px;height:1px;background:repeating-linear-gradient(to right,#808080 0 1px,transparent 1px 2px)"></div>
<svg class="a" style="left:45px;top:167px" width="14" height="9" viewBox="0 0 14 9" shape-rendering="crispEdges"><rect x="5" y="1" width="4" height="7" fill="#808000" stroke="#000"/><path d="M0 8.5h14" stroke="#000"/></svg>
<div class="t" style="left:65.8px;top:163.84px;font-size:12px;color:#000;letter-spacing:0px;transform:scaleX(0.903);transform-origin:0 0;">TargetSIOU</div>
<div class="a" style="left:52px;top:177px;width:1px;height:27px;background:repeating-linear-gradient(to bottom,#808080 0 1px,transparent 1px 2px)"></div>
<div class="a" style="left:53px;top:186px;width:10px;height:1px;background:repeating-linear-gradient(to right,#808080 0 1px,transparent 1px 2px)"></div>
<div class="a" style="left:53px;top:202px;width:10px;height:1px;background:repeating-linear-gradient(to right,#808080 0 1px,transparent 1px 2px)"></div>
<svg class="a" style="left:0;top:0" width="100" height="215" viewBox="0 0 100 215" shape-rendering="crispEdges"><rect x="63" y="180" width="2" height="2" fill="#000"/><rect x="67" y="180" width="2" height="2" fill="#000"/><rect x="64" y="182" width="2" height="1" fill="#000"/><rect x="66" y="182" width="2" height="1" fill="#000"/><rect x="65" y="183" width="2" height="3" fill="#000"/><rect x="70" y="182" width="3" height="1" fill="#000"/><rect x="70" y="184" width="3" height="1" fill="#000"/><rect x="74" y="180" width="4" height="1" fill="#f00"/><rect x="76" y="181" width="2" height="1" fill="#f00"/><rect x="75" y="182" width="2" height="2" fill="#f00"/><rect x="74" y="184" width="2" height="2" fill="#f00"/><rect x="64" y="188" width="4" height="1" fill="#000"/><rect x="63" y="189" width="1" height="1" fill="#000"/><rect x="64" y="190" width="3" height="1" fill="#000"/><rect x="67" y="191" width="1" height="1" fill="#000"/><rect x="63" y="192" width="4" height="1" fill="#000"/><rect x="70" y="189" width="3" height="1" fill="#000"/><rect x="70" y="191" width="3" height="1" fill="#000"/><rect x="74" y="188" width="4" height="1" fill="#f00"/><rect x="77" y="189" width="1" height="1" fill="#f00"/><rect x="75" y="190" width="3" height="1" fill="#f00"/><rect x="77" y="191" width="1" height="1" fill="#f00"/><rect x="74" y="192" width="4" height="1" fill="#f00"/><rect x="66" y="196" width="3" height="1" fill="#000"/><rect x="71" y="196" width="2" height="1" fill="#000"/><rect x="75" y="196" width="3" height="1" fill="#000"/><rect x="63" y="198" width="17" height="1" fill="#00008b"/><rect x="63" y="200" width="1" height="1" fill="#00008b"/><rect x="66" y="200" width="3" height="1" fill="#000"/><rect x="70" y="200" width="3" height="1" fill="#000"/><rect x="74" y="200" width="4" height="1" fill="#000"/><rect x="63" y="202" width="1" height="1" fill="#00008b"/><rect x="66" y="202" width="3" height="1" fill="#000"/><rect x="70" y="202" width="3" height="1" fill="#000"/><rect x="74" y="202" width="4" height="1" fill="#000"/><rect x="63" y="204" width="1" height="1" fill="#00008b"/><rect x="66" y="204" width="3" height="1" fill="#000"/><rect x="70" y="204" width="3" height="1" fill="#000"/><rect x="74" y="204" width="4" height="1" fill="#000"/><rect x="63" y="206" width="1" height="1" fill="#00008b"/><rect x="66" y="206" width="3" height="1" fill="#000"/><rect x="70" y="206" width="3" height="1" fill="#000"/><rect x="74" y="206" width="4" height="1" fill="#000"/><rect x="63" y="208" width="1" height="1" fill="#00008b"/><rect x="66" y="208" width="3" height="1" fill="#000"/><rect x="70" y="208" width="3" height="1" fill="#000"/><rect x="74" y="208" width="4" height="1" fill="#000"/></svg>
<div class="a" style="left:82px;top:178px;width:80px;height:16px;background:#e9e9e9"></div>
<div class="t" style="left:84px;top:179.84px;font-size:12px;color:#000;letter-spacing:0px;transform:scaleX(0.865);transform-origin:0 0;">Parameter Set 1</div>
<div class="t" style="left:84px;top:195.34px;font-size:12px;color:#000;letter-spacing:0px;transform:scaleX(0.849);transform-origin:0 0;">Positions1</div>
<div class="a" style="left:227px;top:80px;width:563px;height:381px;overflow:hidden;border-radius:6px 6px 0 0">
<div class="a" style="left:0px;top:0px;width:563px;height:381px;background:#dae6f3;border:1px solid #444;border-radius:6px 6px 0 0"></div>
<div class="a" style="left:1px;top:1px;width:561px;height:1px;background:#eef4fa;border-radius:5px 5px 0 0"></div>
<div class="a" style="left:1px;top:2px;width:561px;height:23px;background:linear-gradient(#bfcfdd,#d8e5f1);border-radius:4px 4px 0 0"></div>
<svg class="a" style="left:4px;top:5px" width="16" height="16" viewBox="0 0 16 16" shape-rendering="crispEdges"><rect x="0" y="0" width="16" height="16" fill="#c8c8c8"/><rect x="1" y="3" width="14" height="1" fill="#e0e0e0"/><rect x="2" y="4" width="5" height="10" fill="#000"/><rect x="9" y="4" width="5" height="10" fill="#000"/><rect x="3" y="5" width="3" height="3" fill="#f00"/><rect x="10" y="5" width="3" height="3" fill="#0f0"/><rect x="3" y="8" width="3" height="5" fill="#808000"/><rect x="10" y="8" width="3" height="5" fill="#808000"/><rect x="1" y="13" width="14" height="1" fill="#000"/></svg>
<div class="t" style="left:24px;top:6.90px;font-size:13px;color:#48525c;letter-spacing:0px;">TargetSIOU: Parameter Set 1 Unit and Memory Parameters</div>
<div class="a" style="left:461px;top:5px;width:31px;height:17px;background:linear-gradient(#e5edf6 0%,#d9e5f1 45%,#c7d7e8 55%,#d5e2ef 100%);border:1px solid #99aabc;border-radius:3px"></div>
<div class="a" style="left:471px;top:13px;width:11px;height:5px;background:#fff;border:1.5px solid #3c4650;border-radius:1.5px"></div>
<div class="a" style="left:494px;top:5px;width:31px;height:17px;background:linear-gradient(#e5edf6 0%,#d9e5f1 45%,#c7d7e8 55%,#d5e2ef 100%);border:1px solid #99aabc;border-radius:3px"></div>
<div class="a" style="left:504px;top:9px;width:11px;height:9px;background:#e4e4e4;border:1.6px solid #3c4650;border-radius:2px"></div>
<div class="a" style="left:507px;top:11.5px;width:5px;height:3px;background:#cfd6de;border:1px solid #3c4650"></div>
<div class="a" style="left:527px;top:5px;width:31px;height:17px;background:linear-gradient(#e5edf6 0%,#d9e5f1 45%,#c7d7e8 55%,#d5e2ef 100%);border:1px solid #99aabc;border-radius:3px"></div>
<svg class="a" style="left:536px;top:8px" width="13" height="11" viewBox="0 0 13 11"><path d="M2.8 3 L10.2 8 M10.2 3 L2.8 8" stroke="#3c4650" stroke-width="4.6" stroke-linecap="round"/><path d="M2.8 3 L10.2 8 M10.2 3 L2.8 8" stroke="#fff" stroke-width="2.6" stroke-linecap="round"/></svg>
<div class="a" style="left:3px;top:25px;width:557px;height:353px;background:#f0f0f0"></div>
<div class="a" style="left:10px;top:39px;width:110px;height:101px;border:1px solid #a0a0a0"></div>
<div class="a" style="left:11px;top:40px;width:108px;height:99px;border-left:1px solid #fff;border-top:1px solid #fff"></div>
<div class="a" style="left:10px;top:140px;width:111px;height:1px;background:#fff"></div>
<div class="a" style="left:120px;top:39px;width:1px;height:102px;background:#fff"></div>
<div class="t" style="left:19px;top:34.04px;font-size:12px;color:#000;letter-spacing:0px;transform:scaleX(0.88);transform-origin:0 0;background:#f0f0f0;padding:0 2px;margin-left:-2px">Number of Axes:</div>
<div class="a" style="left:130px;top:39px;width:416px;height:101px;border:1px solid #a0a0a0"></div>
<div class="a" style="left:131px;top:40px;width:414px;height:99px;border-left:1px solid #fff;border-top:1px solid #fff"></div>
<div class="a" style="left:130px;top:140px;width:417px;height:1px;background:#fff"></div>
<div class="a" style="left:546px;top:39px;width:1px;height:102px;background:#fff"></div>
<div class="t" style="left:140px;top:34.04px;font-size:12px;color:#000;letter-spacing:0px;transform:scaleX(0.88);transform-origin:0 0;background:#f0f0f0;padding:0 2px;margin-left:-2px">Tasks:</div>
<div class="a" style="left:10px;top:156px;width:60px;height:184px;border:1px solid #a0a0a0"></div>
<div class="a" style="left:11px;top:157px;width:58px;height:182px;border-left:1px solid #fff;border-top:1px solid #fff"></div>
<div class="a" style="left:10px;top:340px;width:61px;height:1px;background:#fff"></div>
<div class="a" style="left:70px;top:156px;width:1px;height:185px;background:#fff"></div>
<div class="t" style="left:19.5px;top:151.24px;font-size:12px;color:#000;letter-spacing:0px;transform:scaleX(0.88);transform-origin:0 0;background:#f0f0f0;padding:0 2px;margin-left:-2px">Digital</div>
<svg class="a" style="left:27px;top:59px" width="12" height="12" viewBox="0 0 12 12"><circle cx="5.5" cy="5.5" r="5" fill="#fff" stroke="#a0a0a0"/><path d="M1.5 9.5 A5 5 0 0 1 9.5 1.5" fill="none" stroke="#555" stroke-width="1"/></svg>
<svg class="a" style="left:27px;top:94px" width="12" height="12" viewBox="0 0 12 12"><circle cx="5.5" cy="5.5" r="5" fill="#fff" stroke="#a0a0a0"/><path d="M1.5 9.5 A5 5 0 0 1 9.5 1.5" fill="none" stroke="#555" stroke-width="1"/><circle cx="5.5" cy="5.5" r="1.8" fill="#000"/></svg>
<div class="t" style="left:44px;top:59.44px;font-size:12px;color:#000;">1</div>
<div class="t" style="left:17px;top:180.84px;font-size:12px;color:#000;">1</div>
<div class="a" style="left:34px;top:181px;width:13px;height:13px;background:#fff;border-top:1px solid #a0a0a0;border-left:1px solid #a0a0a0;border-right:1px solid #fff;border-bottom:1px solid #fff"></div>
<div class="a" style="left:35px;top:182px;width:11px;height:11px;border-top:1px solid #696969;border-left:1px solid #696969;border-right:1px solid #e3e3e3;border-bottom:1px solid #e3e3e3"></div>
<svg class="a" style="left:36px;top:183px" width="9" height="9" viewBox="0 0 9 9"><path d="M1 3.8 L3.5 6.8 L8.2 1.5" fill="none" stroke="#000" stroke-width="2.2"/></svg>
<div class="t" style="left:17px;top:222.84px;font-size:12px;color:#000;">2</div>
<div class="a" style="left:34px;top:223px;width:13px;height:13px;background:#fff;border-top:1px solid #a0a0a0;border-left:1px solid #a0a0a0;border-right:1px solid #fff;border-bottom:1px solid #fff"></div>
<div class="a" style="left:35px;top:224px;width:11px;height:11px;border-top:1px solid #696969;border-left:1px solid #696969;border-right:1px solid #e3e3e3;border-bottom:1px solid #e3e3e3"></div>
<svg class="a" style="left:36px;top:225px" width="9" height="9" viewBox="0 0 9 9"><path d="M1 3.8 L3.5 6.8 L8.2 1.5" fill="none" stroke="#000" stroke-width="2.2"/></svg>
<div class="t" style="left:17px;top:265.84px;font-size:12px;color:#000;">3</div>
<div class="a" style="left:34px;top:266px;width:13px;height:13px;background:#fff;border-top:1px solid #a0a0a0;border-left:1px solid #a0a0a0;border-right:1px solid #fff;border-bottom:1px solid #fff"></div>
<div class="a" style="left:35px;top:267px;width:11px;height:11px;border-top:1px solid #696969;border-left:1px solid #696969;border-right:1px solid #e3e3e3;border-bottom:1px solid #e3e3e3"></div>
<svg class="a" style="left:36px;top:268px" width="9" height="9" viewBox="0 0 9 9"><path d="M1 3.8 L3.5 6.8 L8.2 1.5" fill="none" stroke="#000" stroke-width="2.2"/></svg>
<div class="t" style="left:17px;top:308.84px;font-size:12px;color:#000;">4</div>
<div class="a" style="left:34px;top:309px;width:13px;height:13px;background:#fff;border-top:1px solid #a0a0a0;border-left:1px solid #a0a0a0;border-right:1px solid #fff;border-bottom:1px solid #fff"></div>
<div class="a" style="left:35px;top:310px;width:11px;height:11px;border-top:1px solid #696969;border-left:1px solid #696969;border-right:1px solid #e3e3e3;border-bottom:1px solid #e3e3e3"></div>
<svg class="a" style="left:36px;top:311px" width="9" height="9" viewBox="0 0 9 9"><path d="M1 3.8 L3.5 6.8 L8.2 1.5" fill="none" stroke="#000" stroke-width="2.2"/></svg>
<div class="a" style="left:2px;top:358px;width:200px;height:20px;background:#f0f0f0;border-top:1px solid #a0a0a0;border-left:1px solid #a0a0a0;border-right:1px solid #fff;border-bottom:1px solid #fff"></div>
<div class="a" style="left:3px;top:359px;width:198px;height:18px;border-top:1px solid #696969;border-left:1px solid #696969;border-right:1px solid #e3e3e3;border-bottom:1px solid #e3e3e3"></div>
</div>
<div class="a" style="left:271px;top:171px;width:300px;height:167px;overflow:hidden;border-radius:6px 6px 0 0">
<div class="a" style="left:0px;top:0px;width:300px;height:167px;background:#dae6f3;border:1px solid #444;border-radius:6px 6px 0 0"></div>
<div class="a" style="left:1px;top:1px;width:298px;height:1px;background:#eef4fa;border-radius:5px 5px 0 0"></div>
<div class="a" style="left:1px;top:2px;width:298px;height:22px;background:linear-gradient(#bfcfdd,#d8e5f1);border-radius:4px 4px 0 0"></div>
<svg class="a" style="left:4px;top:5px" width="16" height="16" viewBox="0 0 16 16" shape-rendering="crispEdges"></svg>
<div class="t" style="left:24px;top:7.00px;font-size:13px;color:#48525c;letter-spacing:0px;"></div>
<div class="a" style="left:3px;top:24px;width:294px;height:140px;background:#f0f0f0"></div>
<div class="a" style="left:4px;top:148px;width:10px;height:16px;background:#9a9a9a"></div>
</div>
<div class="a" style="left:301px;top:155px;width:481px;height:368px;overflow:hidden;border-radius:6px 6px 0 0">
<div class="a" style="left:0px;top:0px;width:481px;height:368px;background:#dae6f3;border:1px solid #444;border-radius:6px 6px 0 0"></div>
<div class="a" style="left:1px;top:1px;width:479px;height:1px;background:#eef4fa;border-radius:5px 5px 0 0"></div>
<div class="a" style="left:1px;top:2px;width:479px;height:23px;background:linear-gradient(#bfcfdd,#d8e5f1);border-radius:4px 4px 0 0"></div>
<svg class="a" style="left:4px;top:5px" width="16" height="16" viewBox="0 0 16 16" shape-rendering="crispEdges"><rect x="0" y="0" width="16" height="16" fill="#c8c8c8"/><rect x="1" y="3" width="14" height="1" fill="#e0e0e0"/><rect x="2" y="4" width="5" height="10" fill="#000"/><rect x="9" y="4" width="5" height="10" fill="#000"/><rect x="3" y="5" width="3" height="3" fill="#f00"/><rect x="10" y="5" width="3" height="3" fill="#0f0"/><rect x="3" y="8" width="3" height="5" fill="#808000"/><rect x="10" y="8" width="3" height="5" fill="#808000"/><rect x="1" y="13" width="14" height="1" fill="#000"/></svg>
<div class="t" style="left:24px;top:7.00px;font-size:13px;color:#48525c;letter-spacing:0px;">TargetSIOU: Parameter Set 1</div>
<div class="a" style="left:379px;top:5px;width:31px;height:17px;background:linear-gradient(#e5edf6 0%,#d9e5f1 45%,#c7d7e8 55%,#d5e2ef 100%);border:1px solid #99aabc;border-radius:3px"></div>
<div class="a" style="left:389px;top:13px;width:11px;height:5px;background:#fff;border:1.5px solid #3c4650;border-radius:1.5px"></div>
<div class="a" style="left:412px;top:5px;width:31px;height:17px;background:linear-gradient(#e5edf6 0%,#d9e5f1 45%,#c7d7e8 55%,#d5e2ef 100%);border:1px solid #99aabc;border-radius:3px"></div>
<div class="a" style="left:422px;top:9px;width:11px;height:9px;background:#e4e4e4;border:1.6px solid #3c4650;border-radius:2px"></div>
<div class="a" style="left:425px;top:11.5px;width:5px;height:3px;background:#cfd6de;border:1px solid #3c4650"></div>
<div class="a" style="left:445px;top:5px;width:31px;height:17px;background:linear-gradient(#e5edf6 0%,#d9e5f1 45%,#c7d7e8 55%,#d5e2ef 100%);border:1px solid #99aabc;border-radius:3px"></div>
<svg class="a" style="left:454px;top:8px" width="13" height="11" viewBox="0 0 13 11"><path d="M2.8 3 L10.2 8 M10.2 3 L2.8 8" stroke="#3c4650" stroke-width="4.6" stroke-linecap="round"/><path d="M2.8 3 L10.2 8 M10.2 3 L2.8 8" stroke="#fff" stroke-width="2.6" stroke-linecap="round"/></svg>
<div class="a" style="left:3px;top:25px;width:475px;height:340px;background:#f0f0f0"></div>
<div class="a" style="left:27px;top:39px;width:424px;height:291px;border:1px solid #a0a0a0"></div>
<div class="a" style="left:28px;top:40px;width:422px;height:289px;border-left:1px solid #fff;border-top:1px solid #fff"></div>
<div class="a" style="left:27px;top:330px;width:425px;height:1px;background:#fff"></div>
<div class="a" style="left:451px;top:39px;width:1px;height:292px;background:#fff"></div>
<div class="a" style="left:4px;top:345px;width:19px;height:19px;background:#c0c0c0;border-top:2px solid #8c8c8c;border-left:2px solid #8c8c8c;border-right:1px solid #fff;border-bottom:1px solid #fff"></div>
<svg class="a" style="left:10px;top:351px" width="10" height="9" viewBox="0 0 10 9"><path d="M0.5 0.5 L9 8.5 M9 0.5 L0.5 8.5" stroke="#000" stroke-width="1.2"/></svg>
<div class="a" style="left:23px;top:345px;width:420px;height:19px;background:#f0f0f0;border-top:1px solid #a0a0a0;border-left:1px solid #a0a0a0;border-right:1px solid #fff;border-bottom:1px solid #fff"></div>
<div class="a" style="left:24px;top:346px;width:418px;height:17px;border-top:1px solid #696969;border-left:1px solid #696969;border-right:1px solid #e3e3e3;border-bottom:1px solid #e3e3e3"></div>
</div>
<div class="a" style="left:276px;top:131px;width:455px;height:342px;overflow:hidden;border-radius:6px 6px 0 0">
<div class="a" style="left:0px;top:0px;width:455px;height:342px;background:#dae6f3;border:1px solid #444;border-radius:6px 6px 0 0"></div>
<div class="a" style="left:1px;top:1px;width:453px;height:1px;background:#eef4fa;border-radius:5px 5px 0 0"></div>
<div class="a" style="left:1px;top:2px;width:453px;height:22px;background:linear-gradient(#bfcfdd,#d8e5f1);border-radius:4px 4px 0 0"></div>
<svg class="a" style="left:5px;top:4px" width="16" height="16" viewBox="0 0 16 16" shape-rendering="crispEdges"><rect x="0" y="0" width="16" height="16" fill="#c8c8c8"/><rect x="3" y="3" width="7" height="1" fill="#f00"/><rect x="10" y="1" width="1" height="5" fill="#f00"/><rect x="11" y="2" width="1" height="3" fill="#f00"/><rect x="12" y="3" width="1" height="1" fill="#f00"/><rect x="1" y="7" width="14" height="6" fill="#000"/><rect x="1" y="8" width="1" height="1" fill="#fff"/><rect x="3" y="8" width="1" height="1" fill="#fff"/><rect x="4" y="8" width="1" height="1" fill="#fff"/><rect x="6" y="8" width="1" height="1" fill="#fff"/><rect x="7" y="8" width="1" height="1" fill="#fff"/><rect x="9" y="8" width="1" height="1" fill="#fff"/><rect x="10" y="8" width="1" height="1" fill="#fff"/><rect x="12" y="8" width="1" height="1" fill="#fff"/><rect x="13" y="8" width="1" height="1" fill="#fff"/><rect x="2" y="9" width="1" height="1" fill="#fff"/><rect x="3" y="9" width="1" height="1" fill="#fff"/><rect x="5" y="9" width="1" height="1" fill="#fff"/><rect x="6" y="9" width="1" height="1" fill="#fff"/><rect x="8" y="9" width="1" height="1" fill="#fff"/><rect x="9" y="9" width="1" height="1" fill="#fff"/><rect x="11" y="9" width="1" height="1" fill="#fff"/><rect x="12" y="9" width="1" height="1" fill="#fff"/><rect x="14" y="9" width="1" height="1" fill="#fff"/><rect x="1" y="10" width="1" height="1" fill="#fff"/><rect x="2" y="10" width="1" height="1" fill="#fff"/><rect x="4" y="10" width="1" height="1" fill="#fff"/><rect x="5" y="10" width="1" height="1" fill="#fff"/><rect x="7" y="10" width="1" height="1" fill="#fff"/><rect x="8" y="10" width="1" height="1" fill="#fff"/><rect x="10" y="10" width="1" height="1" fill="#fff"/><rect x="11" y="10" width="1" height="1" fill="#fff"/><rect x="13" y="10" width="1" height="1" fill="#fff"/><rect x="14" y="10" width="1" height="1" fill="#fff"/><rect x="1" y="11" width="1" height="1" fill="#fff"/><rect x="3" y="11" width="1" height="1" fill="#fff"/><rect x="4" y="11" width="1" height="1" fill="#fff"/><rect x="6" y="11" width="1" height="1" fill="#fff"/><rect x="7" y="11" width="1" height="1" fill="#fff"/><rect x="9" y="11" width="1" height="1" fill="#fff"/><rect x="10" y="11" width="1" height="1" fill="#fff"/><rect x="12" y="11" width="1" height="1" fill="#fff"/><rect x="13" y="11" width="1" height="1" fill="#fff"/></svg>
<div class="t" style="left:25.6px;top:6.00px;font-size:13px;color:#48525c;letter-spacing:-0.13px;">TargetSIOU: Parameter Set 1 FeedRate Parameters</div>
<div class="a" style="left:353px;top:4px;width:31px;height:17px;background:linear-gradient(#e5edf6 0%,#d9e5f1 45%,#c7d7e8 55%,#d5e2ef 100%);border:1px solid #99aabc;border-radius:3px"></div>
<div class="a" style="left:363px;top:12px;width:11px;height:5px;background:#fff;border:1.5px solid #3c4650;border-radius:1.5px"></div>
<div class="a" style="left:386px;top:4px;width:31px;height:17px;background:linear-gradient(#e5edf6 0%,#d9e5f1 45%,#c7d7e8 55%,#d5e2ef 100%);border:1px solid #99aabc;border-radius:3px"></div>
<div class="a" style="left:396px;top:8px;width:11px;height:9px;background:#e4e4e4;border:1.6px solid #3c4650;border-radius:2px"></div>
<div class="a" style="left:399px;top:10.5px;width:5px;height:3px;background:#cfd6de;border:1px solid #3c4650"></div>
<div class="a" style="left:419px;top:4px;width:31px;height:17px;background:linear-gradient(#e5edf6 0%,#d9e5f1 45%,#c7d7e8 55%,#d5e2ef 100%);border:1px solid #99aabc;border-radius:3px"></div>
<svg class="a" style="left:428px;top:7px" width="13" height="11" viewBox="0 0 13 11"><path d="M2.8 3 L10.2 8 M10.2 3 L2.8 8" stroke="#3c4650" stroke-width="4.6" stroke-linecap="round"/><path d="M2.8 3 L10.2 8 M10.2 3 L2.8 8" stroke="#fff" stroke-width="2.6" stroke-linecap="round"/></svg>
<div class="a" style="left:3px;top:24px;width:449px;height:315px;background:#f0f0f0"></div>
<div class="a" style="left:12px;top:71px;width:430px;height:1px;background:#fff"></div>
<div class="a" style="left:13px;top:72px;width:428px;height:1px;background:#c0c0c0"></div>
<div class="a" style="left:12px;top:71px;width:1px;height:233px;background:#fff"></div>
<div class="a" style="left:13px;top:72px;width:1px;height:231px;background:#c0c0c0"></div>
<div class="a" style="left:441px;top:71px;width:1px;height:233px;background:#000"></div>
<div class="a" style="left:440px;top:72px;width:1px;height:231px;background:#808080"></div>
<div class="a" style="left:12px;top:303px;width:430px;height:1px;background:#000"></div>
<div class="a" style="left:13px;top:302px;width:428px;height:1px;background:#808080"></div>
<div class="a" style="left:76px;top:86px;width:292px;height:98px;border:1px solid #a0a0a0"></div>
<div class="a" style="left:77px;top:87px;width:290px;height:96px;border-left:1px solid #fff;border-top:1px solid #fff"></div>
<div class="a" style="left:76px;top:184px;width:293px;height:1px;background:#fff"></div>
<div class="a" style="left:368px;top:86px;width:1px;height:99px;background:#fff"></div>
<div class="t" style="left:85px;top:81.84px;font-size:12px;color:#000;letter-spacing:0px;transform:scaleX(0.88);transform-origin:0 0;background:#f0f0f0;padding:0 2px;margin-left:-2px">Maximum Feedrates:</div>
<div class="a" style="left:76px;top:207px;width:292px;height:71px;border:1px solid #a0a0a0"></div>
<div class="a" style="left:77px;top:208px;width:290px;height:69px;border-left:1px solid #fff;border-top:1px solid #fff"></div>
<div class="a" style="left:76px;top:278px;width:293px;height:1px;background:#fff"></div>
<div class="a" style="left:368px;top:207px;width:1px;height:72px;background:#fff"></div>
<div class="t" style="left:85px;top:200.84px;font-size:12px;color:#000;letter-spacing:0px;transform:scaleX(0.88);transform-origin:0 0;background:#f0f0f0;padding:0 2px;margin-left:-2px">C</div>
<div class="a" style="left:120px;top:41px;width:105px;height:30px;background:#f0f0f0"></div>
<div class="a" style="left:119px;top:44px;width:1px;height:27px;background:#fff"></div>
<div class="a" style="left:120px;top:44px;width:1px;height:27px;background:#c0c0c0"></div>
<div class="a" style="left:120px;top:43px;width:1px;height:1px;background:#fff"></div>
<div class="a" style="left:121px;top:42px;width:1px;height:1px;background:#fff"></div>
<div class="a" style="left:121px;top:43px;width:1px;height:1px;background:#c0c0c0"></div>
<div class="a" style="left:122px;top:41px;width:99px;height:1px;background:#fff"></div>
<div class="a" style="left:122px;top:42px;width:98px;height:1px;background:#c0c0c0"></div>
<svg class="a" style="left:221px;top:41px" width="5" height="5" viewBox="0 0 5 5"><path d="M0 0.5 L4.5 5" fill="none" stroke="#000" stroke-width="1.2"/><path d="M0 1.5 L3.5 5" fill="none" stroke="#808080" stroke-width="1.2"/></svg>
<div class="a" style="left:225px;top:45px;width:1px;height:26px;background:#000"></div>
<div class="a" style="left:224px;top:45px;width:1px;height:26px;background:#808080"></div>
<div class="a" style="left:228px;top:41px;width:105px;height:30px;background:#f0f0f0"></div>
<div class="a" style="left:227px;top:44px;width:1px;height:27px;background:#fff"></div>
<div class="a" style="left:228px;top:44px;width:1px;height:27px;background:#c0c0c0"></div>
<div class="a" style="left:228px;top:43px;width:1px;height:1px;background:#fff"></div>
<div class="a" style="left:229px;top:42px;width:1px;height:1px;background:#fff"></div>
<div class="a" style="left:229px;top:43px;width:1px;height:1px;background:#c0c0c0"></div>
<div class="a" style="left:230px;top:41px;width:99px;height:1px;background:#fff"></div>
<div class="a" style="left:230px;top:42px;width:98px;height:1px;background:#c0c0c0"></div>
<svg class="a" style="left:329px;top:41px" width="5" height="5" viewBox="0 0 5 5"><path d="M0 0.5 L4.5 5" fill="none" stroke="#000" stroke-width="1.2"/><path d="M0 1.5 L3.5 5" fill="none" stroke="#808080" stroke-width="1.2"/></svg>
<div class="a" style="left:333px;top:45px;width:1px;height:26px;background:#000"></div>
<div class="a" style="left:332px;top:45px;width:1px;height:26px;background:#808080"></div>
<div class="a" style="left:13px;top:40px;width:104px;height:33px;background:#f0f0f0"></div>
<div class="a" style="left:12px;top:43px;width:1px;height:30px;background:#fff"></div>
<div class="a" style="left:13px;top:43px;width:1px;height:30px;background:#c0c0c0"></div>
<div class="a" style="left:13px;top:42px;width:1px;height:1px;background:#fff"></div>
<div class="a" style="left:14px;top:41px;width:1px;height:1px;background:#fff"></div>
<div class="a" style="left:14px;top:42px;width:1px;height:1px;background:#c0c0c0"></div>
<div class="a" style="left:15px;top:40px;width:98px;height:1px;background:#fff"></div>
<div class="a" style="left:15px;top:41px;width:97px;height:1px;background:#c0c0c0"></div>
<svg class="a" style="left:113px;top:40px" width="5" height="5" viewBox="0 0 5 5"><path d="M0 0.5 L4.5 5" fill="none" stroke="#000" stroke-width="1.2"/><path d="M0 1.5 L3.5 5" fill="none" stroke="#808080" stroke-width="1.2"/></svg>
<div class="a" style="left:117px;top:44px;width:1px;height:29px;background:#000"></div>
<div class="a" style="left:116px;top:44px;width:1px;height:29px;background:#808080"></div>
<div class="t" style="left:18.5px;top:43.54px;font-size:12px;color:#000;letter-spacing:-0.1px;font-weight:bold">Feed <u>R</u>ates</div>
<div class="t" style="left:124px;top:43.24px;font-size:12px;color:#000;letter-spacing:0px;transform:scaleX(0.88);transform-origin:0 0;">Acceleratio<u>n</u></div>
<div class="t" style="left:232.3px;top:42.64px;font-size:12px;color:#000;letter-spacing:0px;transform:scaleX(0.9);transform-origin:0 0;">Electronic <u>G</u>earing</div>
<div class="a" style="left:3px;top:320px;width:19px;height:19px;background:#c0c0c0;border-top:2px solid #8c8c8c;border-left:2px solid #8c8c8c;border-right:1px solid #fff;border-bottom:1px solid #fff"></div>
<svg class="a" style="left:9px;top:326px" width="10" height="9" viewBox="0 0 10 9"><path d="M0.5 0.5 L9 8.5 M9 0.5 L0.5 8.5" stroke="#000" stroke-width="1.2"/></svg>
<div class="a" style="left:23px;top:320px;width:428px;height:19px;background:#f0f0f0;border-top:1px solid #a0a0a0;border-left:1px solid #a0a0a0;border-right:1px solid #fff;border-bottom:1px solid #fff"></div>
<div class="a" style="left:24px;top:321px;width:426px;height:17px;border-top:1px solid #696969;border-left:1px solid #696969;border-right:1px solid #e3e3e3;border-bottom:1px solid #e3e3e3"></div>
</div>
<div class="a" style="left:364px;top:219px;width:424px;height:294px;overflow:hidden;border-radius:6px 6px 0 0">
<div class="a" style="left:0px;top:0px;width:424px;height:294px;background:#c3d7ee;border:1px solid #000;border-radius:6px 6px 0 0"></div>
<div class="a" style="left:1px;top:1px;width:422px;height:1px;background:#eef4fa;border-radius:5px 5px 0 0"></div>
<div class="a" style="left:421px;top:20px;width:1px;height:273px;background:#bfe6f5"></div>
<div class="a" style="left:1px;top:291px;width:422px;height:1px;background:#bfe6f5"></div>
<div class="a" style="left:422px;top:20px;width:1px;height:273px;background:#2bc3ee"></div>
<div class="a" style="left:1px;top:292px;width:422px;height:1px;background:#2bc3ee"></div>
<div class="a" style="left:1px;top:20px;width:1px;height:272px;background:#fff"></div>
<div class="a" style="left:1px;top:2px;width:422px;height:23px;background:linear-gradient(#9bb4cf,#bbd0e6);border-radius:4px 4px 0 0"></div>
<svg class="a" style="left:5px;top:5px" width="16" height="16" viewBox="0 0 16 16" shape-rendering="crispEdges"><rect x="0" y="0" width="16" height="16" fill="#c8c8c8"/><rect x="1" y="2" width="15" height="1" fill="#e0e0e0"/><rect x="1" y="3" width="8" height="7" fill="#000"/><rect x="9" y="5" width="3" height="2" fill="#000"/><rect x="12" y="4" width="3" height="5" fill="#00008b"/><rect x="4" y="10" width="1" height="1" fill="#f00"/><rect x="4" y="12" width="1" height="1" fill="#f00"/><rect x="2" y="12" width="1" height="1" fill="#f00"/><rect x="1" y="14" width="1" height="1" fill="#f00"/><rect x="3" y="14" width="1" height="1" fill="#f00"/><rect x="5" y="14" width="1" height="1" fill="#f00"/><rect x="7" y="14" width="1" height="1" fill="#f00"/><rect x="9" y="14" width="1" height="1" fill="#f00"/><rect x="11" y="14" width="1" height="1" fill="#f00"/><rect x="13" y="14" width="1" height="1" fill="#f00"/><rect x="13" y="12" width="1" height="1" fill="#f00"/><rect x="13" y="10" width="1" height="1" fill="#f00"/><rect x="4" y="11" width="1" height="1" fill="#000"/><rect x="3" y="12" width="1" height="1" fill="#000"/><rect x="1" y="12" width="1" height="1" fill="#000"/><rect x="2" y="14" width="1" height="1" fill="#000"/><rect x="4" y="14" width="1" height="1" fill="#000"/><rect x="6" y="14" width="1" height="1" fill="#000"/><rect x="8" y="14" width="1" height="1" fill="#000"/><rect x="10" y="14" width="1" height="1" fill="#000"/><rect x="12" y="14" width="1" height="1" fill="#000"/><rect x="13" y="13" width="1" height="1" fill="#000"/><rect x="13" y="11" width="1" height="1" fill="#000"/><rect x="13" y="9" width="1" height="1" fill="#000"/></svg>
<div class="t" style="left:25.4px;top:7.20px;font-size:13px;color:#000;letter-spacing:-0.05px;">TargetSIOU: Parameter Set 1 Servo Parameters</div>
<div class="a" style="left:322px;top:5px;width:31px;height:17px;background:linear-gradient(#d5e3f1 0%,#c3d5e8 45%,#a9c1dc 55%,#c0d4ea 100%);border:1px solid #7f94ab;border-radius:3px"></div>
<div class="a" style="left:332px;top:13px;width:11px;height:5px;background:#fff;border:1.5px solid #3c4650;border-radius:1.5px"></div>
<div class="a" style="left:355px;top:5px;width:31px;height:17px;background:linear-gradient(#d5e3f1 0%,#c3d5e8 45%,#a9c1dc 55%,#c0d4ea 100%);border:1px solid #7f94ab;border-radius:3px"></div>
<div class="a" style="left:365px;top:9px;width:11px;height:9px;background:#e4e4e4;border:1.6px solid #3c4650;border-radius:2px"></div>
<div class="a" style="left:368px;top:11.5px;width:5px;height:3px;background:#cfd6de;border:1px solid #3c4650"></div>
<div class="a" style="left:388px;top:5px;width:31px;height:17px;background:linear-gradient(#e8a090 0%,#d7745f 45%,#c1462c 55%,#d06a4f 100%);border:1px solid #6b2a20;border-radius:3px"></div>
<svg class="a" style="left:397px;top:8px" width="13" height="11" viewBox="0 0 13 11"><path d="M2.8 3 L10.2 8 M10.2 3 L2.8 8" stroke="#3a1a14" stroke-width="4.6" stroke-linecap="round"/><path d="M2.8 3 L10.2 8 M10.2 3 L2.8 8" stroke="#fff" stroke-width="2.6" stroke-linecap="round"/></svg>
<div class="a" style="left:3px;top:25px;width:418px;height:266px;background:#f0f0f0"></div>
<div class="a" style="left:1px;top:20px;width:1px;height:272px;background:#fff"></div>
<div class="a" style="left:17px;top:39px;width:383px;height:217px;border:1px solid #a0a0a0"></div>
<div class="a" style="left:18px;top:40px;width:381px;height:215px;border-left:1px solid #fff;border-top:1px solid #fff"></div>
<div class="a" style="left:17px;top:256px;width:384px;height:1px;background:#fff"></div>
<div class="a" style="left:400px;top:39px;width:1px;height:218px;background:#fff"></div>
<div class="t" style="left:25px;top:34.04px;font-size:12px;color:#000;letter-spacing:0px;transform:scaleX(0.88);transform-origin:0 0;background:#f0f0f0;padding:0 2px;margin-left:-2px">Servo Settings:</div>
<div class="t" style="left:21.5px;top:60.84px;font-size:12px;color:#000;letter-spacing:0px;transform:scaleX(0.88);transform-origin:0 0;">Error Counter Warning:</div>
<div class="a" style="left:221px;top:57px;width:88px;height:18px;background:#fff;border-top:1px solid #a0a0a0;border-left:1px solid #a0a0a0;border-right:1px solid #fff;border-bottom:1px solid #fff"></div>
<div class="a" style="left:222px;top:58px;width:86px;height:16px;border-top:1px solid #696969;border-left:1px solid #696969;border-right:1px solid #e3e3e3;border-bottom:1px solid #e3e3e3"></div>
<div class="t" style="left:108.5px;width:200px;text-align:right;top:61.24px;font-size:12px;color:#000;letter-spacing:0px;transform:scaleX(0.88);transform-origin:100% 0;">10000</div>
<div class="t" style="left:317.29999999999995px;top:61.24px;font-size:12px;color:#000;letter-spacing:0px;transform:scaleX(0.88);transform-origin:0 0;">Pulse</div>
<div class="t" style="left:21.5px;top:88.84px;font-size:12px;color:#000;letter-spacing:0px;transform:scaleX(0.88);transform-origin:0 0;">In Position:</div>
<div class="a" style="left:221px;top:84px;width:88px;height:18px;background:#fff;border-top:1px solid #a0a0a0;border-left:1px solid #a0a0a0;border-right:1px solid #fff;border-bottom:1px solid #fff"></div>
<div class="a" style="left:222px;top:85px;width:86px;height:16px;border-top:1px solid #696969;border-left:1px solid #696969;border-right:1px solid #e3e3e3;border-bottom:1px solid #e3e3e3"></div>
<div class="t" style="left:108.5px;width:200px;text-align:right;top:88.24px;font-size:12px;color:#000;letter-spacing:0px;transform:scaleX(0.88);transform-origin:100% 0;">10</div>
<div class="t" style="left:317.29999999999995px;top:88.24px;font-size:12px;color:#000;letter-spacing:0px;transform:scaleX(0.88);transform-origin:0 0;">Pulse</div>
<div class="t" style="left:21.5px;top:118.14px;font-size:12px;color:#000;letter-spacing:0px;transform:scaleX(0.88);transform-origin:0 0;">Position Loop Gain:</div>
<div class="a" style="left:221px;top:113px;width:88px;height:18px;background:#fff;border-top:1px solid #a0a0a0;border-left:1px solid #a0a0a0;border-right:1px solid #fff;border-bottom:1px solid #fff"></div>
<div class="a" style="left:222px;top:114px;width:86px;height:16px;border-top:1px solid #696969;border-left:1px solid #696969;border-right:1px solid #e3e3e3;border-bottom:1px solid #e3e3e3"></div>
<div class="t" style="left:108.5px;width:200px;text-align:right;top:117.24px;font-size:12px;color:#000;letter-spacing:0px;transform:scaleX(0.88);transform-origin:100% 0;">40</div>
<div class="t" style="left:317.29999999999995px;top:117.24px;font-size:12px;color:#000;letter-spacing:0px;transform:scaleX(0.88);transform-origin:0 0;">1/s</div>
<div class="t" style="left:21.5px;top:142.84px;font-size:12px;color:#000;letter-spacing:0px;transform:scaleX(0.88);transform-origin:0 0;">Position Loop FF Gain:</div>
<div class="a" style="left:221px;top:142px;width:88px;height:18px;background:#fff;border-top:1px solid #a0a0a0;border-left:1px solid #a0a0a0;border-right:1px solid #fff;border-bottom:1px solid #fff"></div>
<div class="a" style="left:222px;top:143px;width:86px;height:16px;border-top:1px solid #696969;border-left:1px solid #696969;border-right:1px solid #e3e3e3;border-bottom:1px solid #e3e3e3"></div>
<div class="t" style="left:108.5px;width:200px;text-align:right;top:146.24px;font-size:12px;color:#000;letter-spacing:0px;transform:scaleX(0.88);transform-origin:100% 0;">0</div>
<div class="t" style="left:317.29999999999995px;top:146.24px;font-size:12px;color:#000;letter-spacing:0px;transform:scaleX(0.88);transform-origin:0 0;">%</div>
<div class="t" style="left:21.5px;top:173.94px;font-size:12px;color:#000;letter-spacing:0px;transform:scaleX(0.88);transform-origin:0 0;">BackLash Correction:</div>
<div class="a" style="left:221px;top:170px;width:88px;height:18px;background:#fff;border-top:1px solid #a0a0a0;border-left:1px solid #a0a0a0;border-right:1px solid #fff;border-bottom:1px solid #fff"></div>
<div class="a" style="left:222px;top:171px;width:86px;height:16px;border-top:1px solid #696969;border-left:1px solid #696969;border-right:1px solid #e3e3e3;border-bottom:1px solid #e3e3e3"></div>
<div class="t" style="left:108.5px;width:200px;text-align:right;top:174.24px;font-size:12px;color:#000;letter-spacing:0px;transform:scaleX(0.88);transform-origin:100% 0;">0</div>
<div class="t" style="left:317.29999999999995px;top:174.24px;font-size:12px;color:#000;letter-spacing:0px;transform:scaleX(0.88);transform-origin:0 0;">Pulse</div>
<div class="t" style="left:21.5px;top:201.94px;font-size:12px;color:#000;letter-spacing:0px;transform:scaleX(0.88);transform-origin:0 0;">Brake Off Time</div>
<div class="a" style="left:221px;top:198px;width:88px;height:18px;background:#fff;border-top:1px solid #a0a0a0;border-left:1px solid #a0a0a0;border-right:1px solid #fff;border-bottom:1px solid #fff"></div>
<div class="a" style="left:222px;top:199px;width:86px;height:16px;border-top:1px solid #696969;border-left:1px solid #696969;border-right:1px solid #e3e3e3;border-bottom:1px solid #e3e3e3"></div>
<div class="t" style="left:108.5px;width:200px;text-align:right;top:202.24px;font-size:12px;color:#000;letter-spacing:0px;transform:scaleX(0.88);transform-origin:100% 0;">0</div>
<div class="t" style="left:317.29999999999995px;top:202.24px;font-size:12px;color:#000;letter-spacing:0px;transform:scaleX(0.88);transform-origin:0 0;">ms</div>
<div class="t" style="left:21.5px;top:230.84px;font-size:12px;color:#000;letter-spacing:0px;transform:scaleX(0.88);transform-origin:0 0;">Brake On Time</div>
<div class="a" style="left:221px;top:226px;width:88px;height:18px;background:#fff;border-top:1px solid #a0a0a0;border-left:1px solid #a0a0a0;border-right:1px solid #fff;border-bottom:1px solid #fff"></div>
<div class="a" style="left:222px;top:227px;width:86px;height:16px;border-top:1px solid #696969;border-left:1px solid #696969;border-right:1px solid #e3e3e3;border-bottom:1px solid #e3e3e3"></div>
<div class="t" style="left:108.5px;width:200px;text-align:right;top:230.24px;font-size:12px;color:#000;letter-spacing:0px;transform:scaleX(0.88);transform-origin:100% 0;">0</div>
<div class="t" style="left:317.29999999999995px;top:230.24px;font-size:12px;color:#000;letter-spacing:0px;transform:scaleX(0.88);transform-origin:0 0;">ms</div>
<div class="a" style="left:277px;top:60px;width:1px;height:13px;background:#000"></div>
<div class="a" style="left:3px;top:272px;width:19px;height:19px;background:#c0c0c0;border-top:2px solid #8c8c8c;border-left:2px solid #8c8c8c;border-right:1px solid #fff;border-bottom:1px solid #fff"></div>
<svg class="a" style="left:9px;top:278px" width="10" height="9" viewBox="0 0 10 9"><path d="M0.5 0.5 L9 8.5 M9 0.5 L0.5 8.5" stroke="#000" stroke-width="1.2"/></svg>
<div class="a" style="left:24px;top:272px;width:362px;height:19px;background:#f0f0f0;border-top:1px solid #a0a0a0;border-left:1px solid #a0a0a0;border-right:1px solid #fff;border-bottom:1px solid #fff"></div>
<div class="a" style="left:25px;top:273px;width:360px;height:17px;border-top:1px solid #696969;border-left:1px solid #696969;border-right:1px solid #e3e3e3;border-bottom:1px solid #e3e3e3"></div>
</div>
</body></html>
